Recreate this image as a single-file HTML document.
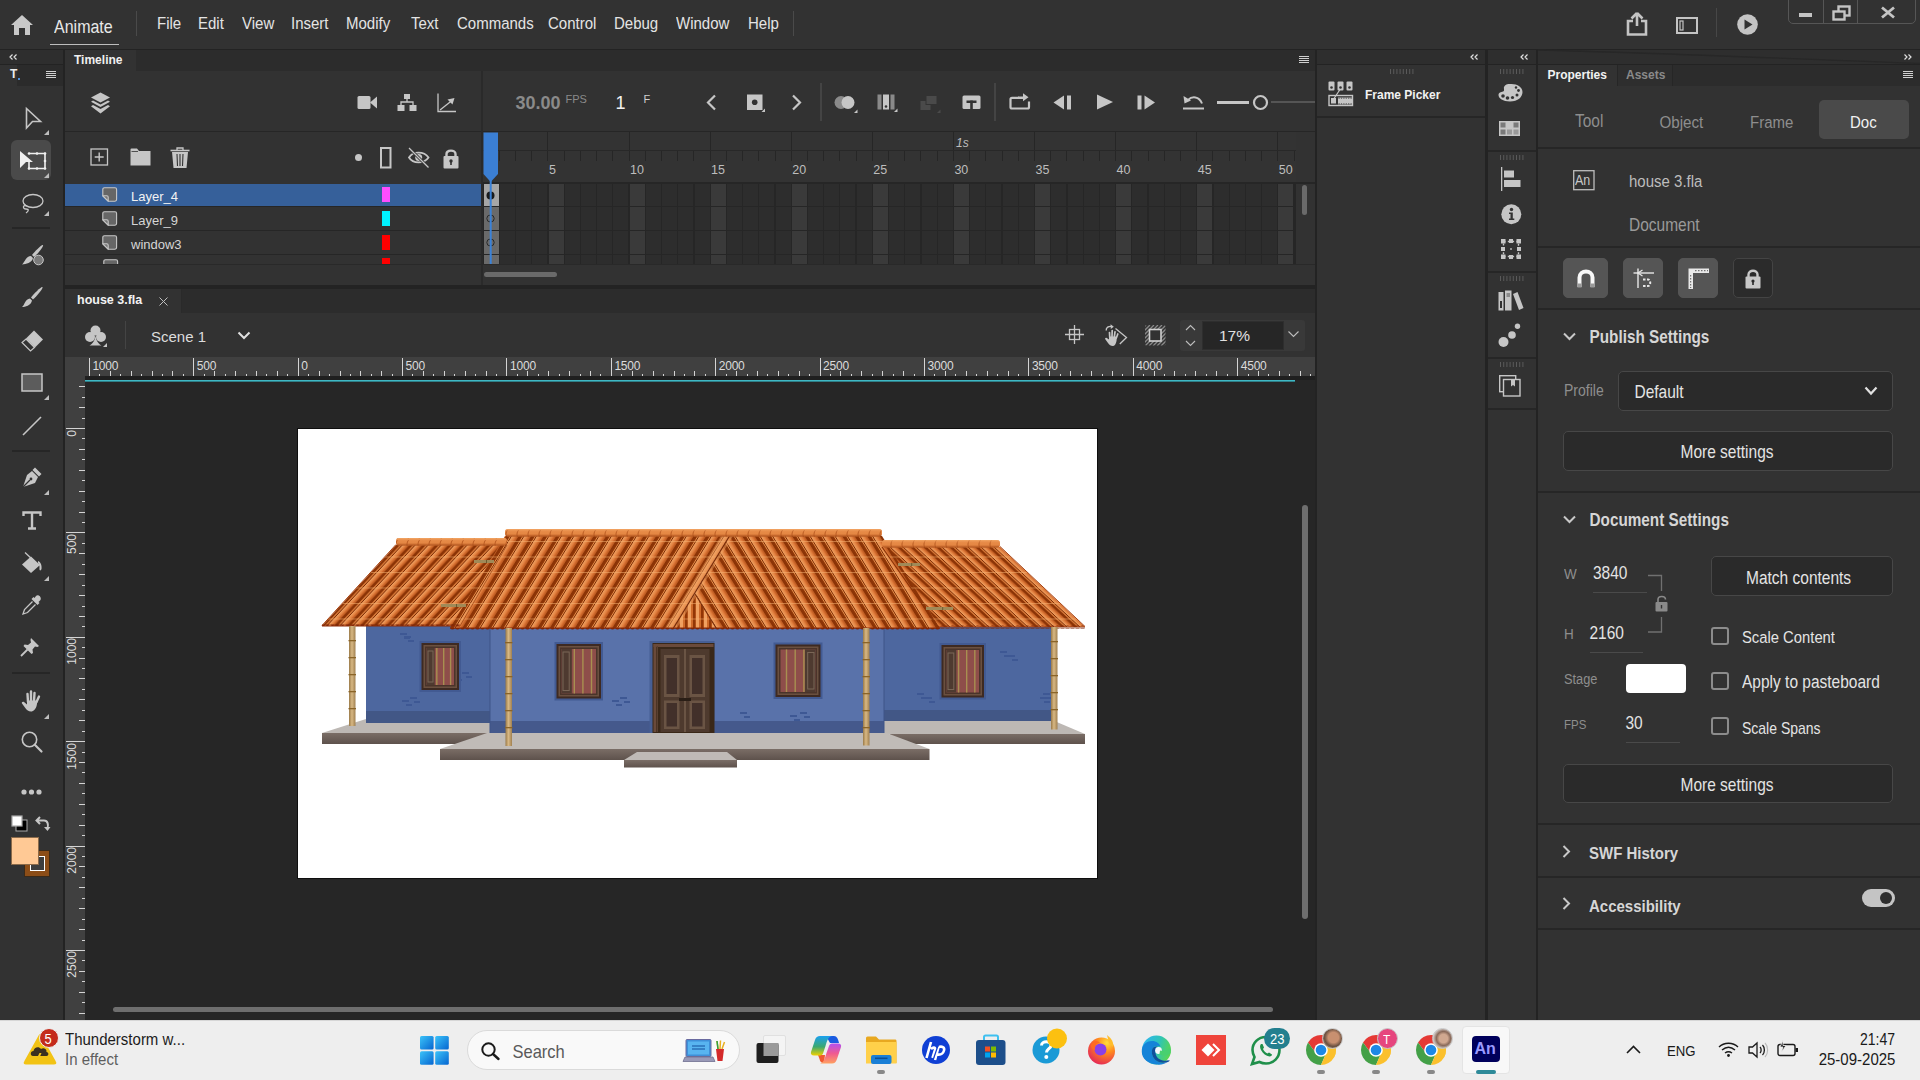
<!DOCTYPE html>
<html><head><meta charset="utf-8">
<style>
*{margin:0;padding:0;box-sizing:border-box}
html,body{width:1920px;height:1080px;overflow:hidden;background:#232323;font-family:"Liberation Sans",sans-serif;color:#e6e6e6}
.a{position:absolute}
.t{position:absolute;white-space:nowrap;line-height:1;transform-origin:0 0.845em}
.ty{transform:scaleY(1.14)}
svg{position:absolute;overflow:visible}
</style></head><body>
<!-- MENU BAR -->
<div class="a" style="left:0;top:0;width:1920px;height:49px;background:#323232"></div>
<svg style="left:10px;top:14px" width="24" height="22" viewBox="0 0 24 22"><path d="M12 1 L23 11 L20 11 L20 21 L15 21 L15 14 L9 14 L9 21 L4 21 L4 11 L1 11 Z" fill="#c8c8c8"/></svg>
<div class="t ty" style="left:54px;top:20px;font-size:16px;color:#e8e8e8">Animate</div>
<div class="a" style="left:50px;top:44px;width:69px;height:1px;background:#bdbdbd"></div>
<div class="a" style="left:136px;top:11px;width:1px;height:25px;background:#4a4a4a"></div>
<div class="t ty" style="left:157px;top:16.3px;font-size:15px;color:#e4e4e4">File</div><div class="t ty" style="left:198px;top:16.3px;font-size:15px;color:#e4e4e4">Edit</div><div class="t ty" style="left:242px;top:16.3px;font-size:15px;color:#e4e4e4">View</div><div class="t ty" style="left:291px;top:16.3px;font-size:15px;color:#e4e4e4">Insert</div><div class="t ty" style="left:346px;top:16.3px;font-size:15px;color:#e4e4e4">Modify</div><div class="t ty" style="left:411px;top:16.3px;font-size:15px;color:#e4e4e4">Text</div><div class="t ty" style="left:457px;top:16.3px;font-size:15px;color:#e4e4e4">Commands</div><div class="t ty" style="left:548px;top:16.3px;font-size:15px;color:#e4e4e4">Control</div><div class="t ty" style="left:614px;top:16.3px;font-size:15px;color:#e4e4e4">Debug</div><div class="t ty" style="left:676px;top:16.3px;font-size:15px;color:#e4e4e4">Window</div><div class="t ty" style="left:748px;top:16.3px;font-size:15px;color:#e4e4e4">Help</div>
<div class="a" style="left:793px;top:11px;width:1px;height:25px;background:#4a4a4a"></div>


<!-- top right icons -->
<svg style="left:1626px;top:12px" width="22" height="24" viewBox="0 0 22 24"><path d="M11 1 L5.5 6.5 M11 1 L16.5 6.5 M11 1.5 V14 M7 9 H2 V22.5 H20 V9 H15" stroke="#c4c4c4" stroke-width="2.6" fill="none"/></svg>
<svg style="left:1676px;top:17px" width="22" height="17" viewBox="0 0 22 17"><rect x="1" y="1" width="20" height="15" stroke="#c4c4c4" stroke-width="2" fill="none"/><rect x="4" y="4" width="3" height="9" stroke="#c4c4c4" stroke-width="1.2" fill="none"/></svg>
<div class="a" style="left:1716px;top:8px;width:1px;height:29px;background:#474747"></div>
<svg style="left:1737px;top:14px" width="21" height="21" viewBox="0 0 21 21"><circle cx="10.5" cy="10.5" r="10.3" fill="#c4c4c4"/><path d="M7.5 5.5 L15.5 10.5 L7.5 15.5 Z" fill="#323232"/></svg>
<div class="a" style="left:1788px;top:-2px;width:128px;height:26px;border:1px solid #565656;border-radius:0 0 5px 5px"></div>
<div class="a" style="left:1823px;top:0;width:1px;height:23px;background:#565656"></div>
<div class="a" style="left:1857px;top:0;width:1px;height:23px;background:#565656"></div>
<div class="a" style="left:1799px;top:13px;width:13px;height:4px;background:#c4c4c4"></div>
<svg style="left:1832px;top:5px" width="19" height="16" viewBox="0 0 19 16"><rect x="6.5" y="1.5" width="11" height="9" stroke="#c4c4c4" stroke-width="2.4" fill="none"/><rect x="1.5" y="6.5" width="11" height="8" stroke="#c4c4c4" stroke-width="2.4" fill="#323232"/></svg>
<svg style="left:1881px;top:7px" width="14" height="11" viewBox="0 0 14 11"><path d="M1 0.5 L13 10.5 M13 0.5 L1 10.5" stroke="#c4c4c4" stroke-width="2.8"/></svg>

<!-- LEFT TOOLBAR -->
<div class="a" style="left:0;top:50px;width:63px;height:14px;background:#2e2e2e"></div>
<div class="a" style="left:0;top:65px;width:63px;height:955px;background:#323232"></div>


<!-- LEFT TOOLBAR CONTENT -->
<svg style="left:9px;top:54px" width="8" height="6" viewBox="0 0 8 6"><path d="M3.5 0.5 L1 3 L3.5 5.5 M7.5 0.5 L5 3 L7.5 5.5" stroke="#e0e0e0" stroke-width="1.2" fill="none"/></svg>
<div class="a" style="left:17px;top:65px;width:46px;height:21px;background:#2b2b2b"></div>
<div class="t" style="left:10px;top:68px;font-size:12px;font-weight:700;color:#ececec">T</div>
<div class="a" style="left:18px;top:78px;width:2px;height:2px;background:#4b8fdc"></div>
<svg style="left:46px;top:71px" width="10" height="8" viewBox="0 0 10 8"><rect x="0" y="0" width="10" height="1" fill="#d0d0d0"/><rect x="0" y="2" width="10" height="1" fill="#d0d0d0"/><rect x="0" y="4" width="10" height="1" fill="#d0d0d0"/><rect x="0" y="6" width="10" height="1" fill="#d0d0d0"/></svg>
<svg style="left:25px;top:107px" width="17" height="23" viewBox="0 0 17 23"><path d="M1.5 1.5 L15.5 14.5 L7.5 14.5 L1.5 21 Z" stroke="#c6c6c6" stroke-width="1.6" fill="none" stroke-linejoin="miter"/></svg>
<svg style="left:44px;top:130px" width="5" height="5" viewBox="0 0 5 5"><path d="M5 0 L5 5 L0 5 Z" fill="#bdbdbd"/></svg>
<div class="a" style="left:11px;top:140px;width:40px;height:40px;background:#4a4a4a;border-radius:6px"></div>
<svg style="left:19px;top:149px" width="28" height="22" viewBox="0 0 28 22"><path d="M1 2 L14 13 L7 13 L1 19 Z" fill="#f0f0f0"/><path d="M10 4.5 H26 V19.5 H10 V13" stroke="#f0f0f0" stroke-width="1.6" fill="none"/><circle cx="10" cy="4.5" r="1.3" fill="#f0f0f0"/><circle cx="18" cy="4.5" r="1.3" fill="#f0f0f0"/><circle cx="26" cy="4.5" r="1.3" fill="#f0f0f0"/><circle cx="26" cy="12" r="1.3" fill="#f0f0f0"/><circle cx="26" cy="19.5" r="1.3" fill="#f0f0f0"/><circle cx="18" cy="19.5" r="1.3" fill="#f0f0f0"/><circle cx="10" cy="19.5" r="1.3" fill="#f0f0f0"/></svg>
<svg style="left:44px;top:173px" width="5" height="5" viewBox="0 0 5 5"><path d="M5 0 L5 5 L0 5 Z" fill="#bdbdbd"/></svg>
<svg style="left:21px;top:192px" width="23" height="23" viewBox="0 0 23 23"><ellipse cx="12" cy="9" rx="10" ry="6.5" stroke="#c6c6c6" stroke-width="1.3" fill="none"/><path d="M6 14 C2 12, 1 17, 5 17 C8 17, 8 19, 5 21" stroke="#c6c6c6" stroke-width="1.3" fill="none"/></svg>
<svg style="left:44px;top:211px" width="5" height="5" viewBox="0 0 5 5"><path d="M5 0 L5 5 L0 5 Z" fill="#bdbdbd"/></svg>
<div class="a" style="left:12px;top:227px;width:38px;height:2px;background:#262626"></div>
<svg style="left:21px;top:244px" width="24" height="23" viewBox="0 0 24 23"><path d="M22 1 C23 2, 17 10, 13 13 L11 11 C14 7, 21 0, 22 1Z" fill="#c6c6c6"/><path d="M10 12 L12 14 C11 19, 5 20, 1 20.5 C4 18, 5 12, 10 12Z" fill="#c6c6c6"/><circle cx="17.5" cy="16" r="4.8" fill="#7a7a7a" stroke="#c6c6c6" stroke-width="1"/></svg>
<svg style="left:21px;top:286px" width="23" height="23" viewBox="0 0 23 23"><path d="M21.5 1 C22.5 2, 16 10, 12 13.5 L10 11.5 C13 7.5, 20.5 0, 21.5 1Z" fill="#c6c6c6"/><path d="M9 12.5 L11 14.5 C10 19.5, 4 21, 1 21 C4 18.5, 4 13, 9 12.5Z" fill="#c6c6c6"/></svg>
<svg style="left:21px;top:329px" width="24" height="23" viewBox="0 0 24 23"><path d="M13 1.5 L22 10.5 L14 18.5 L5 9.5 Z" fill="#c6c6c6"/><path d="M5 10 L13.5 18.5 L9.5 22 L1 13.5 Z" fill="none" stroke="#c6c6c6" stroke-width="1.2"/></svg>
<svg style="left:21px;top:373px" width="22" height="19" viewBox="0 0 22 19"><rect x="1" y="1" width="20" height="17" fill="#5c5c5c" stroke="#c6c6c6" stroke-width="1.5"/></svg>
<svg style="left:44px;top:395px" width="5" height="5" viewBox="0 0 5 5"><path d="M5 0 L5 5 L0 5 Z" fill="#bdbdbd"/></svg>
<svg style="left:22px;top:416px" width="20" height="20" viewBox="0 0 20 20"><path d="M1 19 L19 1" stroke="#c6c6c6" stroke-width="1.6"/></svg>
<div class="a" style="left:12px;top:450px;width:38px;height:2px;background:#262626"></div>
<svg style="left:21px;top:466px" width="22" height="22" viewBox="0 0 22 22"><path d="M14 1.5 L20.5 8 L18 10.5 L11.5 4 Z" fill="#c6c6c6"/><path d="M11 5 L17 11 L14 17 L2 21 L6 9 Z" fill="#c6c6c6"/><path d="M2 21 L9 14" stroke="#323232" stroke-width="1.3"/><circle cx="10" cy="13" r="1.4" fill="#323232"/></svg>
<svg style="left:44px;top:490px" width="5" height="5" viewBox="0 0 5 5"><path d="M5 0 L5 5 L0 5 Z" fill="#bdbdbd"/></svg>
<svg style="left:22px;top:511px" width="20" height="19" viewBox="0 0 20 19"><path d="M1.5 5 V1.5 H18.5 V5 M10 1.5 V17.5 M6 17.5 H14" stroke="#c6c6c6" stroke-width="2.4" fill="none"/></svg>
<svg style="left:21px;top:552px" width="22" height="22" viewBox="0 0 22 22"><path d="M10 4.5 L19 13 L10 21 L1 12.5 Z" fill="#c6c6c6"/><path d="M4 0.5 L12 8" stroke="#c6c6c6" stroke-width="1.3"/><path d="M17 9 C20 10, 21 14, 20.5 17 C20 19, 18 19, 18.5 16 C18.7 14, 18 12, 17 11Z" fill="#c6c6c6"/></svg>
<svg style="left:44px;top:576px" width="5" height="5" viewBox="0 0 5 5"><path d="M5 0 L5 5 L0 5 Z" fill="#bdbdbd"/></svg>
<svg style="left:21px;top:594px" width="22" height="22" viewBox="0 0 22 22"><path d="M15 2 C17 0, 21 3, 19.5 6 L17.5 8 L18.5 9 L16.5 11 L10.5 5 L12.5 3 L13.5 4 Z" fill="#c6c6c6"/><path d="M11.5 7.5 L3.5 15.5 L2 20 L6.5 18.5 L14.5 10.5" stroke="#c6c6c6" stroke-width="1.3" fill="none"/></svg>
<svg style="left:20px;top:637px" width="20" height="20" viewBox="0 0 20 20"><path d="M11 1 L19 9 L17.5 10 L15 9.5 L12.5 12.5 L13 16 L11.5 17 L3.5 9 L4.5 7.5 L8 8 L11 5.5 L10.5 3 Z" fill="#c6c6c6"/><path d="M7.5 12.5 L1 19" stroke="#c6c6c6" stroke-width="1.8"/></svg>
<div class="a" style="left:12px;top:672px;width:38px;height:2px;background:#262626"></div>
<svg style="left:21px;top:689px" width="22" height="23" viewBox="0 0 22 23"><path d="M7 13 L6.5 5 M10 12 L10 2.5 M13 12 L13.5 4 M15.5 13 L18 7.5" stroke="#c6c6c6" stroke-width="2.4" stroke-linecap="round"/><path d="M6 11.5 H16.5 L15.8 16 C15 20, 12.5 22.5, 10 22.5 C7.5 22.5, 5.8 21, 4.3 19 L1 14.5 C0.2 13.2, 1.8 12, 3 13 L6 15.5 Z" fill="#c6c6c6"/></svg>
<svg style="left:44px;top:714px" width="5" height="5" viewBox="0 0 5 5"><path d="M5 0 L5 5 L0 5 Z" fill="#bdbdbd"/></svg>
<svg style="left:21px;top:731px" width="22" height="23" viewBox="0 0 22 23"><circle cx="8.5" cy="8.5" r="7.2" stroke="#c6c6c6" stroke-width="1.6" fill="none"/><path d="M13.8 13.8 L20.5 20.5" stroke="#c6c6c6" stroke-width="2.2" stroke-linecap="round"/></svg>
<svg style="left:20px;top:789px" width="23" height="6" viewBox="0 0 23 6"><circle cx="4" cy="3" r="2.6" fill="#c6c6c6"/><circle cx="11.5" cy="3" r="2.6" fill="#c6c6c6"/><circle cx="19" cy="3" r="2.6" fill="#c6c6c6"/></svg>
<svg style="left:11px;top:815px" width="17" height="17" viewBox="0 0 17 17"><rect x="5" y="5" width="11" height="11" fill="#000" stroke="#aaa" stroke-width="1"/><rect x="1" y="1" width="10" height="10" fill="#fff" stroke="#aaa" stroke-width="1.2"/></svg>
<svg style="left:36px;top:816px" width="15" height="16" viewBox="0 0 15 16"><path d="M4 1 L0.5 4.5 L4 8 M1 4.5 H8 C12 4.5, 12.5 9, 11.5 12" stroke="#c6c6c6" stroke-width="2" fill="none"/><path d="M8 11 L11.5 15 L14.5 11 Z" fill="#c6c6c6"/></svg>
<div class="a" style="left:24px;top:850px;width:26px;height:27px;background:#8c4d17;border:1px solid #3a2a1a"></div>
<div class="a" style="left:30px;top:856px;width:15px;height:15px;background:#3e3e3e;border:1.5px solid #ffffff"></div>
<div class="a" style="left:11px;top:837px;width:28px;height:28px;background:#ffc995;border:1px solid #8a6a4a"></div>

<!-- TIMELINE PANEL -->
<div class="a" style="left:65px;top:50px;width:1250px;height:235px;background:#323232"></div>

<div class="a" style="left:136px;top:50px;width:1179px;height:21px;background:#2c2c2c"></div>
<div class="t" style="left:74px;top:54px;font-size:12px;font-weight:700;color:#f0f0f0">Timeline</div>
<svg style="left:1299px;top:56px" width="10" height="8" viewBox="0 0 10 8"><rect x="0" y="0" width="10" height="1" fill="#d0d0d0"/><rect x="0" y="2" width="10" height="1" fill="#d0d0d0"/><rect x="0" y="4" width="10" height="1" fill="#d0d0d0"/><rect x="0" y="6" width="10" height="1" fill="#d0d0d0"/></svg>
<svg style="left:90px;top:92px" width="21" height="22" viewBox="0 0 21 22"><path d="M10.5 0.5 L20 5.5 L10.5 10.5 L1 5.5 Z" fill="#c6c6c6"/><path d="M3 8.5 L10.5 12.5 L18 8.5 L20 9.8 L10.5 15 L1 9.8 Z" fill="#c6c6c6"/><path d="M3 13 L10.5 17 L18 13 L20 14.3 L10.5 21.5 L1 14.3 Z" fill="#c6c6c6"/></svg>
<svg style="left:357px;top:95px" width="21" height="15" viewBox="0 0 21 15"><rect x="0.5" y="1" width="13" height="13" rx="1.5" fill="#c6c6c6"/><path d="M13 7.5 L20 1.5 V13.5 Z" fill="#c6c6c6"/></svg>
<svg style="left:397px;top:94px" width="20" height="17" viewBox="0 0 20 17"><rect x="7" y="0" width="6" height="5" fill="#c6c6c6"/><rect x="0.5" y="11" width="7" height="6" fill="#c6c6c6"/><rect x="12.5" y="11" width="7" height="6" fill="#c6c6c6"/><path d="M10 5 V8 M4 11 V8 H16 V11" stroke="#c6c6c6" stroke-width="1.3" fill="none"/></svg>
<svg style="left:437px;top:93px" width="20" height="20" viewBox="0 0 20 20"><path d="M1 0.5 V18.5 H19" stroke="#c6c6c6" stroke-width="1.3" fill="none"/><path d="M3 17 L15 7.5" stroke="#c6c6c6" stroke-width="1.3"/><path d="M17.5 5 L10.5 6.5 L15.5 11.5 Z" fill="#c6c6c6"/></svg>
<div class="t" style="left:515.5px;top:94px;font-size:18px;font-weight:700;color:#8a8a8a">30.00</div>
<div class="t" style="left:565.5px;top:93.6px;font-size:11px;color:#8a8a8a">FPS</div>
<div class="t" style="left:615.5px;top:94px;font-size:18px;color:#f2f2f2">1</div>
<div class="t" style="left:643.5px;top:93.6px;font-size:11px;color:#cfcfcf">F</div>
<svg style="left:705px;top:94px" width="12" height="17" viewBox="0 0 12 17"><path d="M10 1.5 L3 8.5 L10 15.5" stroke="#c6c6c6" stroke-width="2.2" fill="none"/></svg>
<svg style="left:747px;top:94px" width="19" height="20" viewBox="0 0 19 20"><rect x="0" y="0.5" width="15.5" height="15.5" fill="#c6c6c6"/><circle cx="7.7" cy="8.2" r="2.8" fill="#323232"/><path d="M18 14.5 V18 H14.5 Z" fill="#c6c6c6"/></svg>
<svg style="left:791px;top:94px" width="12" height="17" viewBox="0 0 12 17"><path d="M2 1.5 L9 8.5 L2 15.5" stroke="#c6c6c6" stroke-width="2.2" fill="none"/></svg>
<div class="a" style="left:820px;top:83px;width:2px;height:38px;background:#444"></div>
<svg style="left:834px;top:95px" width="25" height="19" viewBox="0 0 25 19"><circle cx="7" cy="7.5" r="6.5" fill="#8a8a8a"/><circle cx="14" cy="7.5" r="6.5" fill="#c6c6c6"/><path d="M23.5 14.5 V18 H20 Z" fill="#c6c6c6"/></svg>
<svg style="left:877px;top:94px" width="22" height="20" viewBox="0 0 22 20"><rect x="0.5" y="0.5" width="4" height="15" fill="#8a8a8a"/><rect x="6" y="0.5" width="6" height="15" fill="#c6c6c6"/><rect x="13.5" y="0.5" width="4" height="15" fill="#8a8a8a"/><circle cx="9" cy="12.5" r="1.3" fill="#323232"/><path d="M20.5 14.5 V18 H17 Z" fill="#c6c6c6"/></svg>
<svg style="left:920px;top:95px" width="22" height="19" viewBox="0 0 22 19"><rect x="0.5" y="6" width="10" height="9" fill="#4a4a4a"/><rect x="6" y="0.5" width="11" height="9" fill="#4a4a4a" stroke="#323232" stroke-width="1"/><path d="M20.5 14.5 V18 H17 Z" fill="#4a4a4a"/></svg>
<svg style="left:962px;top:95px" width="20" height="15" viewBox="0 0 20 15"><rect x="0.5" y="0.5" width="18" height="13.5" rx="1.5" fill="#c6c6c6"/><rect x="4.5" y="5.5" width="10" height="2.5" fill="#323232"/><rect x="8.2" y="5.5" width="2.6" height="9" fill="#323232"/></svg>
<div class="a" style="left:994px;top:83px;width:2px;height:38px;background:#444"></div>
<svg style="left:1009px;top:93px" width="22" height="17" viewBox="0 0 22 17"><path d="M10 4.8 H3 Q1.5 4.8 1.5 6.3 V14.3 Q1.5 15.5 3 15.5 H18.5 Q20 15.5 20 14 V8.5" stroke="#c6c6c6" stroke-width="2.2" fill="none"/><path d="M9 3.5 H14 V0.3 L19.5 4.3 L14 8.3 V6 H9 Z" fill="#c6c6c6"/></svg>
<svg style="left:1053px;top:95px" width="19" height="15" viewBox="0 0 19 15"><path d="M11 0.5 V14.5 L0.5 7.5 Z" fill="#c6c6c6"/><rect x="14" y="0.5" width="4" height="14" fill="#c6c6c6"/></svg>
<svg style="left:1096px;top:94px" width="18" height="16" viewBox="0 0 18 16"><path d="M1 0.5 V15.5 L17 8 Z" fill="#c6c6c6"/></svg>
<svg style="left:1137px;top:95px" width="19" height="15" viewBox="0 0 19 15"><rect x="0.5" y="0.5" width="4" height="14" fill="#c6c6c6"/><path d="M7.5 0.5 V14.5 L18 7.5 Z" fill="#c6c6c6"/></svg>
<svg style="left:1182px;top:94px" width="23" height="17" viewBox="0 0 23 17"><path d="M1 14.5 H22" stroke="#c6c6c6" stroke-width="2"/><path d="M6 6 C10 2, 17 2, 20 9.5" stroke="#c6c6c6" stroke-width="2" fill="none"/><path d="M1.5 2 L2.5 9.5 L9 6.5 Z" fill="#c6c6c6"/></svg>
<div class="a" style="left:1217px;top:101px;width:32px;height:2.5px;background:#c6c6c6"></div>
<svg style="left:1252px;top:94px" width="17" height="17" viewBox="0 0 17 17"><circle cx="8.5" cy="8.5" r="6.5" stroke="#c6c6c6" stroke-width="2.2" fill="none"/></svg>
<div class="a" style="left:1271px;top:101px;width:44px;height:1.5px;background:#555"></div>
<div class="a" style="left:65px;top:131px;width:1250px;height:1px;background:#262626"></div>
<svg style="left:90px;top:148px" width="19" height="18" viewBox="0 0 19 18"><rect x="1" y="1" width="16.5" height="16" stroke="#c6c6c6" stroke-width="1.3" fill="none"/><path d="M9.2 4.5 V13.5 M4.7 9 H13.7" stroke="#c6c6c6" stroke-width="1.4"/></svg>
<svg style="left:130px;top:148px" width="22" height="18" viewBox="0 0 22 18"><path d="M0.5 1.5 Q0.5 0.5 1.5 0.5 H7 L9 3 H20.5 V17.5 H0.5 Z" fill="#c6c6c6"/><path d="M1.5 3.5 H8" stroke="#323232" stroke-width="0.8"/></svg>
<svg style="left:170px;top:147px" width="20" height="22" viewBox="0 0 20 22"><path d="M0.5 3.5 H19.5" stroke="#c6c6c6" stroke-width="1.6"/><path d="M7 3 V1 H13 V3" stroke="#c6c6c6" stroke-width="1.3" fill="none"/><path d="M2 5 L3.5 21 H16.5 L18 5 Z" fill="#c6c6c6"/><path d="M7 7 L7.5 19 M10 7 V19 M13 7 L12.5 19" stroke="#323232" stroke-width="1.1"/></svg>
<svg style="left:355px;top:154px" width="8" height="8" viewBox="0 0 8 8"><circle cx="3.5" cy="3.5" r="3.5" fill="#c6c6c6"/></svg>
<svg style="left:380px;top:147px" width="12" height="22" viewBox="0 0 12 22"><rect x="1" y="1" width="9.5" height="19.5" stroke="#c6c6c6" stroke-width="2" fill="none"/></svg>
<svg style="left:408px;top:147px" width="22" height="22" viewBox="0 0 22 22"><path d="M1 10.5 C5 4, 16 4, 20.5 10.5 C16 17, 5 17, 1 10.5 Z" stroke="#c6c6c6" stroke-width="1.8" fill="none"/><circle cx="10.7" cy="10.5" r="3.5" fill="#c6c6c6"/><path d="M1 1 L20.5 20.5" stroke="#323232" stroke-width="3"/><path d="M1 1 L20.5 20.5" stroke="#c6c6c6" stroke-width="1.3"/></svg>
<svg style="left:443px;top:148px" width="16" height="21" viewBox="0 0 16 21"><path d="M3.5 8.5 V6 C3.5 1.5, 12.5 1.5, 12.5 6 V8.5" stroke="#c6c6c6" stroke-width="2.4" fill="none"/><rect x="0.5" y="8" width="15" height="12.5" rx="1" fill="#c6c6c6"/><circle cx="8" cy="13" r="1.7" fill="#323232"/><rect x="7.2" y="13" width="1.6" height="4" fill="#323232"/></svg>
<div class="a" style="left:483px;top:132px;width:813px;height:52px;background:#333333"></div>
<div class="a" style="left:483px;top:150px;width:813px;height:1px;background:#282828"></div>
<div class="a" style="left:483px;top:182px;width:832px;height:2px;background:#262626"></div>
<div class="a" style="left:481px;top:71px;width:2px;height:214px;background:#2a2a2a"></div>
<div class="a" style="left:547.4px;top:132px;width:1px;height:18px;background:#262626"></div>
<div class="a" style="left:628.5px;top:132px;width:1px;height:18px;background:#262626"></div>
<div class="a" style="left:709.6px;top:132px;width:1px;height:18px;background:#262626"></div>
<div class="a" style="left:790.7px;top:132px;width:1px;height:18px;background:#262626"></div>
<div class="a" style="left:871.8px;top:132px;width:1px;height:18px;background:#262626"></div>
<div class="a" style="left:952.9px;top:132px;width:1px;height:18px;background:#262626"></div>
<div class="a" style="left:1034.0px;top:132px;width:1px;height:18px;background:#262626"></div>
<div class="a" style="left:1115.1px;top:132px;width:1px;height:18px;background:#262626"></div>
<div class="a" style="left:1196.2px;top:132px;width:1px;height:18px;background:#262626"></div>
<div class="a" style="left:1277.3px;top:132px;width:1px;height:18px;background:#262626"></div>
<div class="a" style="left:498.7px;top:151px;width:1px;height:10px;background:#262626"></div>
<div class="a" style="left:514.9px;top:151px;width:1px;height:10px;background:#262626"></div>
<div class="a" style="left:531.2px;top:151px;width:1px;height:10px;background:#262626"></div>
<div class="a" style="left:547.4px;top:151px;width:1px;height:10px;background:#262626"></div>
<div class="a" style="left:563.6px;top:151px;width:1px;height:10px;background:#262626"></div>
<div class="a" style="left:579.8px;top:151px;width:1px;height:10px;background:#262626"></div>
<div class="a" style="left:596.0px;top:151px;width:1px;height:10px;background:#262626"></div>
<div class="a" style="left:612.3px;top:151px;width:1px;height:10px;background:#262626"></div>
<div class="a" style="left:628.5px;top:151px;width:1px;height:10px;background:#262626"></div>
<div class="a" style="left:644.7px;top:151px;width:1px;height:10px;background:#262626"></div>
<div class="a" style="left:660.9px;top:151px;width:1px;height:10px;background:#262626"></div>
<div class="a" style="left:677.1px;top:151px;width:1px;height:10px;background:#262626"></div>
<div class="a" style="left:693.4px;top:151px;width:1px;height:10px;background:#262626"></div>
<div class="a" style="left:709.6px;top:151px;width:1px;height:10px;background:#262626"></div>
<div class="a" style="left:725.8px;top:151px;width:1px;height:10px;background:#262626"></div>
<div class="a" style="left:742.0px;top:151px;width:1px;height:10px;background:#262626"></div>
<div class="a" style="left:758.2px;top:151px;width:1px;height:10px;background:#262626"></div>
<div class="a" style="left:774.5px;top:151px;width:1px;height:10px;background:#262626"></div>
<div class="a" style="left:790.7px;top:151px;width:1px;height:10px;background:#262626"></div>
<div class="a" style="left:806.9px;top:151px;width:1px;height:10px;background:#262626"></div>
<div class="a" style="left:823.1px;top:151px;width:1px;height:10px;background:#262626"></div>
<div class="a" style="left:839.3px;top:151px;width:1px;height:10px;background:#262626"></div>
<div class="a" style="left:855.6px;top:151px;width:1px;height:10px;background:#262626"></div>
<div class="a" style="left:871.8px;top:151px;width:1px;height:10px;background:#262626"></div>
<div class="a" style="left:888.0px;top:151px;width:1px;height:10px;background:#262626"></div>
<div class="a" style="left:904.2px;top:151px;width:1px;height:10px;background:#262626"></div>
<div class="a" style="left:920.4px;top:151px;width:1px;height:10px;background:#262626"></div>
<div class="a" style="left:936.7px;top:151px;width:1px;height:10px;background:#262626"></div>
<div class="a" style="left:952.9px;top:151px;width:1px;height:10px;background:#262626"></div>
<div class="a" style="left:969.1px;top:151px;width:1px;height:10px;background:#262626"></div>
<div class="a" style="left:985.3px;top:151px;width:1px;height:10px;background:#262626"></div>
<div class="a" style="left:1001.5px;top:151px;width:1px;height:10px;background:#262626"></div>
<div class="a" style="left:1017.8px;top:151px;width:1px;height:10px;background:#262626"></div>
<div class="a" style="left:1034.0px;top:151px;width:1px;height:10px;background:#262626"></div>
<div class="a" style="left:1050.2px;top:151px;width:1px;height:10px;background:#262626"></div>
<div class="a" style="left:1066.4px;top:151px;width:1px;height:10px;background:#262626"></div>
<div class="a" style="left:1082.6px;top:151px;width:1px;height:10px;background:#262626"></div>
<div class="a" style="left:1098.9px;top:151px;width:1px;height:10px;background:#262626"></div>
<div class="a" style="left:1115.1px;top:151px;width:1px;height:10px;background:#262626"></div>
<div class="a" style="left:1131.3px;top:151px;width:1px;height:10px;background:#262626"></div>
<div class="a" style="left:1147.5px;top:151px;width:1px;height:10px;background:#262626"></div>
<div class="a" style="left:1163.7px;top:151px;width:1px;height:10px;background:#262626"></div>
<div class="a" style="left:1180.0px;top:151px;width:1px;height:10px;background:#262626"></div>
<div class="a" style="left:1196.2px;top:151px;width:1px;height:10px;background:#262626"></div>
<div class="a" style="left:1212.4px;top:151px;width:1px;height:10px;background:#262626"></div>
<div class="a" style="left:1228.6px;top:151px;width:1px;height:10px;background:#262626"></div>
<div class="a" style="left:1244.8px;top:151px;width:1px;height:10px;background:#262626"></div>
<div class="a" style="left:1261.1px;top:151px;width:1px;height:10px;background:#262626"></div>
<div class="a" style="left:1277.3px;top:151px;width:1px;height:10px;background:#262626"></div>
<div class="a" style="left:1293.5px;top:151px;width:1px;height:10px;background:#262626"></div>
<div class="t" style="left:548.9px;top:164px;font-size:12.5px;color:#bdbdbd">5</div>
<div class="t" style="left:630.0px;top:164px;font-size:12.5px;color:#bdbdbd">10</div>
<div class="t" style="left:711.1px;top:164px;font-size:12.5px;color:#bdbdbd">15</div>
<div class="t" style="left:792.2px;top:164px;font-size:12.5px;color:#bdbdbd">20</div>
<div class="t" style="left:873.3px;top:164px;font-size:12.5px;color:#bdbdbd">25</div>
<div class="t" style="left:954.4px;top:164px;font-size:12.5px;color:#bdbdbd">30</div>
<div class="t" style="left:1035.5px;top:164px;font-size:12.5px;color:#bdbdbd">35</div>
<div class="t" style="left:1116.6px;top:164px;font-size:12.5px;color:#bdbdbd">40</div>
<div class="t" style="left:1197.7px;top:164px;font-size:12.5px;color:#bdbdbd">45</div>
<div class="t" style="left:1278.8px;top:164px;font-size:12.5px;color:#bdbdbd">50</div>
<div class="t" style="left:956px;top:137px;font-size:12px;font-style:italic;color:#bdbdbd">1s</div>
<div class="a" style="left:483px;top:184px;width:813px;height:80px;background:#262626"></div>
<div class="a" style="left:483.6px;top:184px;width:15.0px;height:22px;background:#a6a6a6"></div>
<div class="a" style="left:499.8px;top:184px;width:15.0px;height:22px;background:#2d2d2d"></div>
<div class="a" style="left:516.0px;top:184px;width:15.0px;height:22px;background:#2d2d2d"></div>
<div class="a" style="left:532.3px;top:184px;width:15.0px;height:22px;background:#2d2d2d"></div>
<div class="a" style="left:548.5px;top:184px;width:15.0px;height:22px;background:#3a3a3a"></div>
<div class="a" style="left:564.7px;top:184px;width:15.0px;height:22px;background:#2d2d2d"></div>
<div class="a" style="left:580.9px;top:184px;width:15.0px;height:22px;background:#2d2d2d"></div>
<div class="a" style="left:597.1px;top:184px;width:15.0px;height:22px;background:#2d2d2d"></div>
<div class="a" style="left:613.4px;top:184px;width:15.0px;height:22px;background:#2d2d2d"></div>
<div class="a" style="left:629.6px;top:184px;width:15.0px;height:22px;background:#3a3a3a"></div>
<div class="a" style="left:645.8px;top:184px;width:15.0px;height:22px;background:#2d2d2d"></div>
<div class="a" style="left:662.0px;top:184px;width:15.0px;height:22px;background:#2d2d2d"></div>
<div class="a" style="left:678.2px;top:184px;width:15.0px;height:22px;background:#2d2d2d"></div>
<div class="a" style="left:694.5px;top:184px;width:15.0px;height:22px;background:#2d2d2d"></div>
<div class="a" style="left:710.7px;top:184px;width:15.0px;height:22px;background:#3a3a3a"></div>
<div class="a" style="left:726.9px;top:184px;width:15.0px;height:22px;background:#2d2d2d"></div>
<div class="a" style="left:743.1px;top:184px;width:15.0px;height:22px;background:#2d2d2d"></div>
<div class="a" style="left:759.3px;top:184px;width:15.0px;height:22px;background:#2d2d2d"></div>
<div class="a" style="left:775.6px;top:184px;width:15.0px;height:22px;background:#2d2d2d"></div>
<div class="a" style="left:791.8px;top:184px;width:15.0px;height:22px;background:#3a3a3a"></div>
<div class="a" style="left:808.0px;top:184px;width:15.0px;height:22px;background:#2d2d2d"></div>
<div class="a" style="left:824.2px;top:184px;width:15.0px;height:22px;background:#2d2d2d"></div>
<div class="a" style="left:840.4px;top:184px;width:15.0px;height:22px;background:#2d2d2d"></div>
<div class="a" style="left:856.7px;top:184px;width:15.0px;height:22px;background:#2d2d2d"></div>
<div class="a" style="left:872.9px;top:184px;width:15.0px;height:22px;background:#3a3a3a"></div>
<div class="a" style="left:889.1px;top:184px;width:15.0px;height:22px;background:#2d2d2d"></div>
<div class="a" style="left:905.3px;top:184px;width:15.0px;height:22px;background:#2d2d2d"></div>
<div class="a" style="left:921.5px;top:184px;width:15.0px;height:22px;background:#2d2d2d"></div>
<div class="a" style="left:937.8px;top:184px;width:15.0px;height:22px;background:#2d2d2d"></div>
<div class="a" style="left:954.0px;top:184px;width:15.0px;height:22px;background:#3a3a3a"></div>
<div class="a" style="left:970.2px;top:184px;width:15.0px;height:22px;background:#2d2d2d"></div>
<div class="a" style="left:986.4px;top:184px;width:15.0px;height:22px;background:#2d2d2d"></div>
<div class="a" style="left:1002.6px;top:184px;width:15.0px;height:22px;background:#2d2d2d"></div>
<div class="a" style="left:1018.9px;top:184px;width:15.0px;height:22px;background:#2d2d2d"></div>
<div class="a" style="left:1035.1px;top:184px;width:15.0px;height:22px;background:#3a3a3a"></div>
<div class="a" style="left:1051.3px;top:184px;width:15.0px;height:22px;background:#2d2d2d"></div>
<div class="a" style="left:1067.5px;top:184px;width:15.0px;height:22px;background:#2d2d2d"></div>
<div class="a" style="left:1083.7px;top:184px;width:15.0px;height:22px;background:#2d2d2d"></div>
<div class="a" style="left:1100.0px;top:184px;width:15.0px;height:22px;background:#2d2d2d"></div>
<div class="a" style="left:1116.2px;top:184px;width:15.0px;height:22px;background:#3a3a3a"></div>
<div class="a" style="left:1132.4px;top:184px;width:15.0px;height:22px;background:#2d2d2d"></div>
<div class="a" style="left:1148.6px;top:184px;width:15.0px;height:22px;background:#2d2d2d"></div>
<div class="a" style="left:1164.8px;top:184px;width:15.0px;height:22px;background:#2d2d2d"></div>
<div class="a" style="left:1181.1px;top:184px;width:15.0px;height:22px;background:#2d2d2d"></div>
<div class="a" style="left:1197.3px;top:184px;width:15.0px;height:22px;background:#3a3a3a"></div>
<div class="a" style="left:1213.5px;top:184px;width:15.0px;height:22px;background:#2d2d2d"></div>
<div class="a" style="left:1229.7px;top:184px;width:15.0px;height:22px;background:#2d2d2d"></div>
<div class="a" style="left:1245.9px;top:184px;width:15.0px;height:22px;background:#2d2d2d"></div>
<div class="a" style="left:1262.2px;top:184px;width:15.0px;height:22px;background:#2d2d2d"></div>
<div class="a" style="left:1278.4px;top:184px;width:15.0px;height:22px;background:#3a3a3a"></div>
<div class="a" style="left:483.6px;top:207px;width:15.0px;height:23px;background:#6a6a6a"></div>
<div class="a" style="left:499.8px;top:207px;width:15.0px;height:23px;background:#2d2d2d"></div>
<div class="a" style="left:516.0px;top:207px;width:15.0px;height:23px;background:#2d2d2d"></div>
<div class="a" style="left:532.3px;top:207px;width:15.0px;height:23px;background:#2d2d2d"></div>
<div class="a" style="left:548.5px;top:207px;width:15.0px;height:23px;background:#3a3a3a"></div>
<div class="a" style="left:564.7px;top:207px;width:15.0px;height:23px;background:#2d2d2d"></div>
<div class="a" style="left:580.9px;top:207px;width:15.0px;height:23px;background:#2d2d2d"></div>
<div class="a" style="left:597.1px;top:207px;width:15.0px;height:23px;background:#2d2d2d"></div>
<div class="a" style="left:613.4px;top:207px;width:15.0px;height:23px;background:#2d2d2d"></div>
<div class="a" style="left:629.6px;top:207px;width:15.0px;height:23px;background:#3a3a3a"></div>
<div class="a" style="left:645.8px;top:207px;width:15.0px;height:23px;background:#2d2d2d"></div>
<div class="a" style="left:662.0px;top:207px;width:15.0px;height:23px;background:#2d2d2d"></div>
<div class="a" style="left:678.2px;top:207px;width:15.0px;height:23px;background:#2d2d2d"></div>
<div class="a" style="left:694.5px;top:207px;width:15.0px;height:23px;background:#2d2d2d"></div>
<div class="a" style="left:710.7px;top:207px;width:15.0px;height:23px;background:#3a3a3a"></div>
<div class="a" style="left:726.9px;top:207px;width:15.0px;height:23px;background:#2d2d2d"></div>
<div class="a" style="left:743.1px;top:207px;width:15.0px;height:23px;background:#2d2d2d"></div>
<div class="a" style="left:759.3px;top:207px;width:15.0px;height:23px;background:#2d2d2d"></div>
<div class="a" style="left:775.6px;top:207px;width:15.0px;height:23px;background:#2d2d2d"></div>
<div class="a" style="left:791.8px;top:207px;width:15.0px;height:23px;background:#3a3a3a"></div>
<div class="a" style="left:808.0px;top:207px;width:15.0px;height:23px;background:#2d2d2d"></div>
<div class="a" style="left:824.2px;top:207px;width:15.0px;height:23px;background:#2d2d2d"></div>
<div class="a" style="left:840.4px;top:207px;width:15.0px;height:23px;background:#2d2d2d"></div>
<div class="a" style="left:856.7px;top:207px;width:15.0px;height:23px;background:#2d2d2d"></div>
<div class="a" style="left:872.9px;top:207px;width:15.0px;height:23px;background:#3a3a3a"></div>
<div class="a" style="left:889.1px;top:207px;width:15.0px;height:23px;background:#2d2d2d"></div>
<div class="a" style="left:905.3px;top:207px;width:15.0px;height:23px;background:#2d2d2d"></div>
<div class="a" style="left:921.5px;top:207px;width:15.0px;height:23px;background:#2d2d2d"></div>
<div class="a" style="left:937.8px;top:207px;width:15.0px;height:23px;background:#2d2d2d"></div>
<div class="a" style="left:954.0px;top:207px;width:15.0px;height:23px;background:#3a3a3a"></div>
<div class="a" style="left:970.2px;top:207px;width:15.0px;height:23px;background:#2d2d2d"></div>
<div class="a" style="left:986.4px;top:207px;width:15.0px;height:23px;background:#2d2d2d"></div>
<div class="a" style="left:1002.6px;top:207px;width:15.0px;height:23px;background:#2d2d2d"></div>
<div class="a" style="left:1018.9px;top:207px;width:15.0px;height:23px;background:#2d2d2d"></div>
<div class="a" style="left:1035.1px;top:207px;width:15.0px;height:23px;background:#3a3a3a"></div>
<div class="a" style="left:1051.3px;top:207px;width:15.0px;height:23px;background:#2d2d2d"></div>
<div class="a" style="left:1067.5px;top:207px;width:15.0px;height:23px;background:#2d2d2d"></div>
<div class="a" style="left:1083.7px;top:207px;width:15.0px;height:23px;background:#2d2d2d"></div>
<div class="a" style="left:1100.0px;top:207px;width:15.0px;height:23px;background:#2d2d2d"></div>
<div class="a" style="left:1116.2px;top:207px;width:15.0px;height:23px;background:#3a3a3a"></div>
<div class="a" style="left:1132.4px;top:207px;width:15.0px;height:23px;background:#2d2d2d"></div>
<div class="a" style="left:1148.6px;top:207px;width:15.0px;height:23px;background:#2d2d2d"></div>
<div class="a" style="left:1164.8px;top:207px;width:15.0px;height:23px;background:#2d2d2d"></div>
<div class="a" style="left:1181.1px;top:207px;width:15.0px;height:23px;background:#2d2d2d"></div>
<div class="a" style="left:1197.3px;top:207px;width:15.0px;height:23px;background:#3a3a3a"></div>
<div class="a" style="left:1213.5px;top:207px;width:15.0px;height:23px;background:#2d2d2d"></div>
<div class="a" style="left:1229.7px;top:207px;width:15.0px;height:23px;background:#2d2d2d"></div>
<div class="a" style="left:1245.9px;top:207px;width:15.0px;height:23px;background:#2d2d2d"></div>
<div class="a" style="left:1262.2px;top:207px;width:15.0px;height:23px;background:#2d2d2d"></div>
<div class="a" style="left:1278.4px;top:207px;width:15.0px;height:23px;background:#3a3a3a"></div>
<div class="a" style="left:483.6px;top:231px;width:15.0px;height:23px;background:#6a6a6a"></div>
<div class="a" style="left:499.8px;top:231px;width:15.0px;height:23px;background:#2d2d2d"></div>
<div class="a" style="left:516.0px;top:231px;width:15.0px;height:23px;background:#2d2d2d"></div>
<div class="a" style="left:532.3px;top:231px;width:15.0px;height:23px;background:#2d2d2d"></div>
<div class="a" style="left:548.5px;top:231px;width:15.0px;height:23px;background:#3a3a3a"></div>
<div class="a" style="left:564.7px;top:231px;width:15.0px;height:23px;background:#2d2d2d"></div>
<div class="a" style="left:580.9px;top:231px;width:15.0px;height:23px;background:#2d2d2d"></div>
<div class="a" style="left:597.1px;top:231px;width:15.0px;height:23px;background:#2d2d2d"></div>
<div class="a" style="left:613.4px;top:231px;width:15.0px;height:23px;background:#2d2d2d"></div>
<div class="a" style="left:629.6px;top:231px;width:15.0px;height:23px;background:#3a3a3a"></div>
<div class="a" style="left:645.8px;top:231px;width:15.0px;height:23px;background:#2d2d2d"></div>
<div class="a" style="left:662.0px;top:231px;width:15.0px;height:23px;background:#2d2d2d"></div>
<div class="a" style="left:678.2px;top:231px;width:15.0px;height:23px;background:#2d2d2d"></div>
<div class="a" style="left:694.5px;top:231px;width:15.0px;height:23px;background:#2d2d2d"></div>
<div class="a" style="left:710.7px;top:231px;width:15.0px;height:23px;background:#3a3a3a"></div>
<div class="a" style="left:726.9px;top:231px;width:15.0px;height:23px;background:#2d2d2d"></div>
<div class="a" style="left:743.1px;top:231px;width:15.0px;height:23px;background:#2d2d2d"></div>
<div class="a" style="left:759.3px;top:231px;width:15.0px;height:23px;background:#2d2d2d"></div>
<div class="a" style="left:775.6px;top:231px;width:15.0px;height:23px;background:#2d2d2d"></div>
<div class="a" style="left:791.8px;top:231px;width:15.0px;height:23px;background:#3a3a3a"></div>
<div class="a" style="left:808.0px;top:231px;width:15.0px;height:23px;background:#2d2d2d"></div>
<div class="a" style="left:824.2px;top:231px;width:15.0px;height:23px;background:#2d2d2d"></div>
<div class="a" style="left:840.4px;top:231px;width:15.0px;height:23px;background:#2d2d2d"></div>
<div class="a" style="left:856.7px;top:231px;width:15.0px;height:23px;background:#2d2d2d"></div>
<div class="a" style="left:872.9px;top:231px;width:15.0px;height:23px;background:#3a3a3a"></div>
<div class="a" style="left:889.1px;top:231px;width:15.0px;height:23px;background:#2d2d2d"></div>
<div class="a" style="left:905.3px;top:231px;width:15.0px;height:23px;background:#2d2d2d"></div>
<div class="a" style="left:921.5px;top:231px;width:15.0px;height:23px;background:#2d2d2d"></div>
<div class="a" style="left:937.8px;top:231px;width:15.0px;height:23px;background:#2d2d2d"></div>
<div class="a" style="left:954.0px;top:231px;width:15.0px;height:23px;background:#3a3a3a"></div>
<div class="a" style="left:970.2px;top:231px;width:15.0px;height:23px;background:#2d2d2d"></div>
<div class="a" style="left:986.4px;top:231px;width:15.0px;height:23px;background:#2d2d2d"></div>
<div class="a" style="left:1002.6px;top:231px;width:15.0px;height:23px;background:#2d2d2d"></div>
<div class="a" style="left:1018.9px;top:231px;width:15.0px;height:23px;background:#2d2d2d"></div>
<div class="a" style="left:1035.1px;top:231px;width:15.0px;height:23px;background:#3a3a3a"></div>
<div class="a" style="left:1051.3px;top:231px;width:15.0px;height:23px;background:#2d2d2d"></div>
<div class="a" style="left:1067.5px;top:231px;width:15.0px;height:23px;background:#2d2d2d"></div>
<div class="a" style="left:1083.7px;top:231px;width:15.0px;height:23px;background:#2d2d2d"></div>
<div class="a" style="left:1100.0px;top:231px;width:15.0px;height:23px;background:#2d2d2d"></div>
<div class="a" style="left:1116.2px;top:231px;width:15.0px;height:23px;background:#3a3a3a"></div>
<div class="a" style="left:1132.4px;top:231px;width:15.0px;height:23px;background:#2d2d2d"></div>
<div class="a" style="left:1148.6px;top:231px;width:15.0px;height:23px;background:#2d2d2d"></div>
<div class="a" style="left:1164.8px;top:231px;width:15.0px;height:23px;background:#2d2d2d"></div>
<div class="a" style="left:1181.1px;top:231px;width:15.0px;height:23px;background:#2d2d2d"></div>
<div class="a" style="left:1197.3px;top:231px;width:15.0px;height:23px;background:#3a3a3a"></div>
<div class="a" style="left:1213.5px;top:231px;width:15.0px;height:23px;background:#2d2d2d"></div>
<div class="a" style="left:1229.7px;top:231px;width:15.0px;height:23px;background:#2d2d2d"></div>
<div class="a" style="left:1245.9px;top:231px;width:15.0px;height:23px;background:#2d2d2d"></div>
<div class="a" style="left:1262.2px;top:231px;width:15.0px;height:23px;background:#2d2d2d"></div>
<div class="a" style="left:1278.4px;top:231px;width:15.0px;height:23px;background:#3a3a3a"></div>
<div class="a" style="left:483.6px;top:255px;width:15.0px;height:9px;background:#6a6a6a"></div>
<div class="a" style="left:499.8px;top:255px;width:15.0px;height:9px;background:#2d2d2d"></div>
<div class="a" style="left:516.0px;top:255px;width:15.0px;height:9px;background:#2d2d2d"></div>
<div class="a" style="left:532.3px;top:255px;width:15.0px;height:9px;background:#2d2d2d"></div>
<div class="a" style="left:548.5px;top:255px;width:15.0px;height:9px;background:#3a3a3a"></div>
<div class="a" style="left:564.7px;top:255px;width:15.0px;height:9px;background:#2d2d2d"></div>
<div class="a" style="left:580.9px;top:255px;width:15.0px;height:9px;background:#2d2d2d"></div>
<div class="a" style="left:597.1px;top:255px;width:15.0px;height:9px;background:#2d2d2d"></div>
<div class="a" style="left:613.4px;top:255px;width:15.0px;height:9px;background:#2d2d2d"></div>
<div class="a" style="left:629.6px;top:255px;width:15.0px;height:9px;background:#3a3a3a"></div>
<div class="a" style="left:645.8px;top:255px;width:15.0px;height:9px;background:#2d2d2d"></div>
<div class="a" style="left:662.0px;top:255px;width:15.0px;height:9px;background:#2d2d2d"></div>
<div class="a" style="left:678.2px;top:255px;width:15.0px;height:9px;background:#2d2d2d"></div>
<div class="a" style="left:694.5px;top:255px;width:15.0px;height:9px;background:#2d2d2d"></div>
<div class="a" style="left:710.7px;top:255px;width:15.0px;height:9px;background:#3a3a3a"></div>
<div class="a" style="left:726.9px;top:255px;width:15.0px;height:9px;background:#2d2d2d"></div>
<div class="a" style="left:743.1px;top:255px;width:15.0px;height:9px;background:#2d2d2d"></div>
<div class="a" style="left:759.3px;top:255px;width:15.0px;height:9px;background:#2d2d2d"></div>
<div class="a" style="left:775.6px;top:255px;width:15.0px;height:9px;background:#2d2d2d"></div>
<div class="a" style="left:791.8px;top:255px;width:15.0px;height:9px;background:#3a3a3a"></div>
<div class="a" style="left:808.0px;top:255px;width:15.0px;height:9px;background:#2d2d2d"></div>
<div class="a" style="left:824.2px;top:255px;width:15.0px;height:9px;background:#2d2d2d"></div>
<div class="a" style="left:840.4px;top:255px;width:15.0px;height:9px;background:#2d2d2d"></div>
<div class="a" style="left:856.7px;top:255px;width:15.0px;height:9px;background:#2d2d2d"></div>
<div class="a" style="left:872.9px;top:255px;width:15.0px;height:9px;background:#3a3a3a"></div>
<div class="a" style="left:889.1px;top:255px;width:15.0px;height:9px;background:#2d2d2d"></div>
<div class="a" style="left:905.3px;top:255px;width:15.0px;height:9px;background:#2d2d2d"></div>
<div class="a" style="left:921.5px;top:255px;width:15.0px;height:9px;background:#2d2d2d"></div>
<div class="a" style="left:937.8px;top:255px;width:15.0px;height:9px;background:#2d2d2d"></div>
<div class="a" style="left:954.0px;top:255px;width:15.0px;height:9px;background:#3a3a3a"></div>
<div class="a" style="left:970.2px;top:255px;width:15.0px;height:9px;background:#2d2d2d"></div>
<div class="a" style="left:986.4px;top:255px;width:15.0px;height:9px;background:#2d2d2d"></div>
<div class="a" style="left:1002.6px;top:255px;width:15.0px;height:9px;background:#2d2d2d"></div>
<div class="a" style="left:1018.9px;top:255px;width:15.0px;height:9px;background:#2d2d2d"></div>
<div class="a" style="left:1035.1px;top:255px;width:15.0px;height:9px;background:#3a3a3a"></div>
<div class="a" style="left:1051.3px;top:255px;width:15.0px;height:9px;background:#2d2d2d"></div>
<div class="a" style="left:1067.5px;top:255px;width:15.0px;height:9px;background:#2d2d2d"></div>
<div class="a" style="left:1083.7px;top:255px;width:15.0px;height:9px;background:#2d2d2d"></div>
<div class="a" style="left:1100.0px;top:255px;width:15.0px;height:9px;background:#2d2d2d"></div>
<div class="a" style="left:1116.2px;top:255px;width:15.0px;height:9px;background:#3a3a3a"></div>
<div class="a" style="left:1132.4px;top:255px;width:15.0px;height:9px;background:#2d2d2d"></div>
<div class="a" style="left:1148.6px;top:255px;width:15.0px;height:9px;background:#2d2d2d"></div>
<div class="a" style="left:1164.8px;top:255px;width:15.0px;height:9px;background:#2d2d2d"></div>
<div class="a" style="left:1181.1px;top:255px;width:15.0px;height:9px;background:#2d2d2d"></div>
<div class="a" style="left:1197.3px;top:255px;width:15.0px;height:9px;background:#3a3a3a"></div>
<div class="a" style="left:1213.5px;top:255px;width:15.0px;height:9px;background:#2d2d2d"></div>
<div class="a" style="left:1229.7px;top:255px;width:15.0px;height:9px;background:#2d2d2d"></div>
<div class="a" style="left:1245.9px;top:255px;width:15.0px;height:9px;background:#2d2d2d"></div>
<div class="a" style="left:1262.2px;top:255px;width:15.0px;height:9px;background:#2d2d2d"></div>
<div class="a" style="left:1278.4px;top:255px;width:15.0px;height:9px;background:#3a3a3a"></div>
<svg style="left:485px;top:190px" width="12" height="11" viewBox="0 0 12 11"><ellipse cx="5.5" cy="5.5" rx="4" ry="4" fill="#1a1a1a"/></svg>
<svg style="left:485px;top:213px" width="12" height="11" viewBox="0 0 12 11"><ellipse cx="5.5" cy="5.5" rx="3.7" ry="3.5" stroke="#2a2a2a" stroke-width="1" fill="none"/></svg>
<svg style="left:485px;top:237px" width="12" height="11" viewBox="0 0 12 11"><ellipse cx="5.5" cy="5.5" rx="3.7" ry="3.5" stroke="#2a2a2a" stroke-width="1" fill="none"/></svg>
<svg style="left:483px;top:132px" width="16" height="133" viewBox="0 0 16 133"><path d="M0.5 0.5 H15 V42 L7.7 50 L0.5 42 Z" fill="#3b7fd4"/><rect x="6.7" y="48" width="2" height="85" fill="#3b82d8"/></svg>
<div class="a" style="left:65px;top:184px;width:416px;height:22px;background:#36609a"></div>
<div class="a" style="left:65px;top:206px;width:416px;height:1px;background:#262626"></div>
<div class="a" style="left:65px;top:230px;width:416px;height:1px;background:#262626"></div>
<div class="a" style="left:65px;top:254px;width:416px;height:1px;background:#262626"></div>
<svg style="left:102px;top:187px" width="16" height="15" viewBox="0 0 16 15"><path d="M2.5 0.8 H13 Q14.6 0.8 14.6 2.4 V12.6 Q14.6 14.2 13 14.2 H6.2 L0.8 8.8 V2.4 Q0.8 0.8 2.5 0.8 Z" fill="#666" stroke="#c8c8c8" stroke-width="1.1"/><path d="M0.8 8.8 H4.8 Q6.2 8.8 6.2 10.2 V14.2 Z" fill="#777" stroke="#c8c8c8" stroke-width="1.1" stroke-linejoin="round"/></svg>
<div class="t" style="left:131px;top:190px;font-size:13px;color:#f2f2f2">Layer_4</div>
<div class="a" style="left:382px;top:187px;width:8px;height:15px;background:#ff4dff"></div>
<svg style="left:102px;top:211px" width="16" height="15" viewBox="0 0 16 15"><path d="M2.5 0.8 H13 Q14.6 0.8 14.6 2.4 V12.6 Q14.6 14.2 13 14.2 H6.2 L0.8 8.8 V2.4 Q0.8 0.8 2.5 0.8 Z" fill="#666" stroke="#c8c8c8" stroke-width="1.1"/><path d="M0.8 8.8 H4.8 Q6.2 8.8 6.2 10.2 V14.2 Z" fill="#777" stroke="#c8c8c8" stroke-width="1.1" stroke-linejoin="round"/></svg>
<div class="t" style="left:131px;top:214px;font-size:13px;color:#d6d6d6">Layer_9</div>
<div class="a" style="left:382px;top:211px;width:8px;height:15px;background:#00f2ff"></div>
<svg style="left:102px;top:235px" width="16" height="15" viewBox="0 0 16 15"><path d="M2.5 0.8 H13 Q14.6 0.8 14.6 2.4 V12.6 Q14.6 14.2 13 14.2 H6.2 L0.8 8.8 V2.4 Q0.8 0.8 2.5 0.8 Z" fill="#666" stroke="#c8c8c8" stroke-width="1.1"/><path d="M0.8 8.8 H4.8 Q6.2 8.8 6.2 10.2 V14.2 Z" fill="#777" stroke="#c8c8c8" stroke-width="1.1" stroke-linejoin="round"/></svg>
<div class="t" style="left:131px;top:238px;font-size:13px;color:#d6d6d6">window3</div>
<div class="a" style="left:382px;top:235px;width:8px;height:15px;background:#ff0000"></div>
<div class="a" style="left:382px;top:258px;width:8px;height:6px;background:#ff0000"></div>
<svg style="left:103px;top:259px" width="16" height="5" viewBox="0 0 16 5"><path d="M0.8 5 V2.4 Q0.8 0.8 2.5 0.8 H13 Q14.6 0.8 14.6 2.4 V5" fill="#666" stroke="#c8c8c8" stroke-width="1.1"/></svg>
<div class="t" style="left:131px;top:262px;font-size:13px;color:#d6d6d6;height:2px;overflow:hidden">Layer_1</div>
<div class="a" style="left:65px;top:264px;width:1250px;height:1px;background:#292929"></div>
<div class="a" style="left:1302px;top:185px;width:5px;height:30px;border-radius:3px;background:#6a6a6a"></div>
<div class="a" style="left:484px;top:272px;width:73px;height:5px;border-radius:3px;background:#6a6a6a"></div>
<!-- DOCUMENT AREA -->
<div class="a" style="left:65px;top:289px;width:1250px;height:731px;background:#323232"></div>

<div class="a" style="left:65px;top:289px;width:1250px;height:24px;background:#2c2c2c"></div>
<div class="a" style="left:65px;top:289px;width:117px;height:24px;background:#323232;border-right:1px solid #2a2a2a"></div>
<div class="t" style="left:77px;top:294px;font-size:12.5px;font-weight:700;color:#f2f2f2">house 3.fla</div>
<svg style="left:159px;top:297px" width="9" height="9" viewBox="0 0 9 9"><path d="M0.5 0.5 L8.5 8.5 M8.5 0.5 L0.5 8.5" stroke="#c0c0c0" stroke-width="1"/></svg>
<svg style="left:85px;top:325px" width="23" height="23" viewBox="0 0 23 23"><circle cx="10.5" cy="5.5" r="5" fill="#c6c6c6"/><circle cx="5" cy="12" r="5" fill="#c6c6c6"/><circle cx="16" cy="12" r="5" fill="#c6c6c6"/><path d="M10.5 9 C10.5 15, 8 18.5, 4.5 20.5 H16.5 C13 18.5, 10.5 15, 10.5 9Z" fill="#c6c6c6"/><path d="M22 18 V22 H18 Z" fill="#c6c6c6"/></svg>
<div class="a" style="left:125px;top:321px;width:1px;height:28px;background:#444"></div>
<div class="t" style="left:151px;top:329px;font-size:15px;color:#dcdcdc">Scene 1</div>
<svg style="left:237px;top:331px" width="14" height="9" viewBox="0 0 14 9"><path d="M1.5 1.5 L7 7 L12.5 1.5" stroke="#e0e0e0" stroke-width="2" fill="none"/></svg>
<svg style="left:1065px;top:325px" width="20" height="20" viewBox="0 0 20 20"><rect x="4.5" y="4.5" width="10" height="10" stroke="#c6c6c6" stroke-width="1.3" fill="none"/><path d="M9.5 0 V19 M0 9.5 H19" stroke="#c6c6c6" stroke-width="1.3"/></svg>
<svg style="left:1104px;top:324px" width="24" height="23" viewBox="0 0 24 23"><path d="M2.2 6.5 C2 3.5, 4.5 2, 8 2.5" stroke="#c6c6c6" stroke-width="1.4" fill="none"/><path d="M6.5 0.3 L9.8 2.7 L6.8 5 Z" fill="#c6c6c6"/><path d="M11.5 4.5 L22.5 13.5 L15.8 20" stroke="#c6c6c6" stroke-width="1.3" fill="none"/><path d="M5.8 14 L5.5 8.5 M8 13 L8.2 6.5 M10.3 13 L11 7.8 M12.3 14 L13.8 10" stroke="#c6c6c6" stroke-width="1.7" stroke-linecap="round"/><path d="M5 12.5 H13 L12.5 17 C12 20, 10.5 22, 8.8 22 C6.8 22, 5.3 20.8, 4 19 L1.3 15.2 C0.6 14.2, 1.8 13.2, 2.8 14 L5 15.5 Z" fill="#c6c6c6"/></svg>
<svg style="left:1145px;top:325px" width="21" height="21" viewBox="0 0 21 21"><defs><clipPath id="cpc"><rect x="0" y="0" width="20.5" height="20.5" rx="1.5"/></clipPath></defs><g clip-path="url(#cpc)" stroke="#8a8a8a" stroke-width="1.3"><path d="M-20 21 L1 0"/><path d="M-16 21 L5 0"/><path d="M-12 21 L9 0"/><path d="M-8 21 L13 0"/><path d="M-4 21 L17 0"/><path d="M0 21 L21 0"/><path d="M4 21 L25 0"/><path d="M8 21 L29 0"/><path d="M12 21 L33 0"/><path d="M16 21 L37 0"/><path d="M20 21 L41 0"/></g><rect x="4.5" y="4.5" width="11.5" height="11.5" stroke="#d0d0d0" stroke-width="1.6" fill="#323232"/></svg>
<div class="a" style="left:1180px;top:320px;width:125px;height:31px;background:#393939;border-radius:3px"></div>
<svg style="left:1185px;top:324px" width="11" height="23" viewBox="0 0 11 23"><path d="M1 6 L5.5 1.5 L10 6 M1 17 L5.5 21.5 L10 17" stroke="#bdbdbd" stroke-width="1.1" fill="none"/></svg>
<div class="a" style="left:1202px;top:321px;width:82px;height:29px;background:#262626;border:1px solid #2e2e2e"></div>
<div class="t" style="left:1219px;top:328px;font-size:15.5px;color:#e0e0e0">17%</div>
<svg style="left:1288px;top:331px" width="11" height="7" viewBox="0 0 11 7"><path d="M0.5 0.5 L5.5 5.5 L10.5 0.5" stroke="#bdbdbd" stroke-width="1.1" fill="none"/></svg>
<div class="a" style="left:85px;top:376px;width:1230px;height:644px;background:#262626"></div>
<div class="a" style="left:65px;top:357px;width:1250px;height:19px;background:#404040"></div>
<div class="a" style="left:65px;top:376px;width:20px;height:644px;background:#404040"></div>
<div class="a" style="left:85px;top:376px;width:1230px;height:4px;background:#1f1f1f"></div>
<div class="a" style="left:85px;top:380px;width:1210px;height:1px;background:#3fb8c4"></div><div class="a" style="left:85px;top:381px;width:1210px;height:1px;background:#2f7f88"></div>
<div class="a" style="left:89px;top:358px;width:1px;height:18px;background:#d4d4d4"></div>
<div class="t" style="left:92.4px;top:360px;font-size:12px;color:#dcdcdc;letter-spacing:-0.2px">1000</div>
<div class="a" style="left:99px;top:374px;width:1px;height:2px;background:#d4d4d4"></div>
<div class="a" style="left:110px;top:371px;width:1px;height:5px;background:#d4d4d4"></div>
<div class="a" style="left:120px;top:374px;width:1px;height:2px;background:#d4d4d4"></div>
<div class="a" style="left:131px;top:371px;width:1px;height:5px;background:#d4d4d4"></div>
<div class="a" style="left:141px;top:374px;width:1px;height:2px;background:#d4d4d4"></div>
<div class="a" style="left:152px;top:371px;width:1px;height:5px;background:#d4d4d4"></div>
<div class="a" style="left:162px;top:374px;width:1px;height:2px;background:#d4d4d4"></div>
<div class="a" style="left:172px;top:371px;width:1px;height:5px;background:#d4d4d4"></div>
<div class="a" style="left:183px;top:374px;width:1px;height:2px;background:#d4d4d4"></div>
<div class="a" style="left:193px;top:358px;width:1px;height:18px;background:#d4d4d4"></div>
<div class="t" style="left:196.8px;top:360px;font-size:12px;color:#dcdcdc;letter-spacing:-0.2px">500</div>
<div class="a" style="left:204px;top:374px;width:1px;height:2px;background:#d4d4d4"></div>
<div class="a" style="left:214px;top:371px;width:1px;height:5px;background:#d4d4d4"></div>
<div class="a" style="left:225px;top:374px;width:1px;height:2px;background:#d4d4d4"></div>
<div class="a" style="left:235px;top:371px;width:1px;height:5px;background:#d4d4d4"></div>
<div class="a" style="left:246px;top:374px;width:1px;height:2px;background:#d4d4d4"></div>
<div class="a" style="left:256px;top:371px;width:1px;height:5px;background:#d4d4d4"></div>
<div class="a" style="left:266px;top:374px;width:1px;height:2px;background:#d4d4d4"></div>
<div class="a" style="left:277px;top:371px;width:1px;height:5px;background:#d4d4d4"></div>
<div class="a" style="left:287px;top:374px;width:1px;height:2px;background:#d4d4d4"></div>
<div class="a" style="left:298px;top:358px;width:1px;height:18px;background:#d4d4d4"></div>
<div class="t" style="left:301.2px;top:360px;font-size:12px;color:#dcdcdc;letter-spacing:-0.2px">0</div>
<div class="a" style="left:308px;top:374px;width:1px;height:2px;background:#d4d4d4"></div>
<div class="a" style="left:319px;top:371px;width:1px;height:5px;background:#d4d4d4"></div>
<div class="a" style="left:329px;top:374px;width:1px;height:2px;background:#d4d4d4"></div>
<div class="a" style="left:340px;top:371px;width:1px;height:5px;background:#d4d4d4"></div>
<div class="a" style="left:350px;top:374px;width:1px;height:2px;background:#d4d4d4"></div>
<div class="a" style="left:360px;top:371px;width:1px;height:5px;background:#d4d4d4"></div>
<div class="a" style="left:371px;top:374px;width:1px;height:2px;background:#d4d4d4"></div>
<div class="a" style="left:381px;top:371px;width:1px;height:5px;background:#d4d4d4"></div>
<div class="a" style="left:392px;top:374px;width:1px;height:2px;background:#d4d4d4"></div>
<div class="a" style="left:402px;top:358px;width:1px;height:18px;background:#d4d4d4"></div>
<div class="t" style="left:405.6px;top:360px;font-size:12px;color:#dcdcdc;letter-spacing:-0.2px">500</div>
<div class="a" style="left:412px;top:374px;width:1px;height:2px;background:#d4d4d4"></div>
<div class="a" style="left:423px;top:371px;width:1px;height:5px;background:#d4d4d4"></div>
<div class="a" style="left:433px;top:374px;width:1px;height:2px;background:#d4d4d4"></div>
<div class="a" style="left:444px;top:371px;width:1px;height:5px;background:#d4d4d4"></div>
<div class="a" style="left:454px;top:374px;width:1px;height:2px;background:#d4d4d4"></div>
<div class="a" style="left:465px;top:371px;width:1px;height:5px;background:#d4d4d4"></div>
<div class="a" style="left:475px;top:374px;width:1px;height:2px;background:#d4d4d4"></div>
<div class="a" style="left:486px;top:371px;width:1px;height:5px;background:#d4d4d4"></div>
<div class="a" style="left:496px;top:374px;width:1px;height:2px;background:#d4d4d4"></div>
<div class="a" style="left:506px;top:358px;width:1px;height:18px;background:#d4d4d4"></div>
<div class="t" style="left:510.0px;top:360px;font-size:12px;color:#dcdcdc;letter-spacing:-0.2px">1000</div>
<div class="a" style="left:517px;top:374px;width:1px;height:2px;background:#d4d4d4"></div>
<div class="a" style="left:527px;top:371px;width:1px;height:5px;background:#d4d4d4"></div>
<div class="a" style="left:538px;top:374px;width:1px;height:2px;background:#d4d4d4"></div>
<div class="a" style="left:548px;top:371px;width:1px;height:5px;background:#d4d4d4"></div>
<div class="a" style="left:559px;top:374px;width:1px;height:2px;background:#d4d4d4"></div>
<div class="a" style="left:569px;top:371px;width:1px;height:5px;background:#d4d4d4"></div>
<div class="a" style="left:580px;top:374px;width:1px;height:2px;background:#d4d4d4"></div>
<div class="a" style="left:590px;top:371px;width:1px;height:5px;background:#d4d4d4"></div>
<div class="a" style="left:600px;top:374px;width:1px;height:2px;background:#d4d4d4"></div>
<div class="a" style="left:611px;top:358px;width:1px;height:18px;background:#d4d4d4"></div>
<div class="t" style="left:614.4px;top:360px;font-size:12px;color:#dcdcdc;letter-spacing:-0.2px">1500</div>
<div class="a" style="left:621px;top:374px;width:1px;height:2px;background:#d4d4d4"></div>
<div class="a" style="left:632px;top:371px;width:1px;height:5px;background:#d4d4d4"></div>
<div class="a" style="left:642px;top:374px;width:1px;height:2px;background:#d4d4d4"></div>
<div class="a" style="left:653px;top:371px;width:1px;height:5px;background:#d4d4d4"></div>
<div class="a" style="left:663px;top:374px;width:1px;height:2px;background:#d4d4d4"></div>
<div class="a" style="left:674px;top:371px;width:1px;height:5px;background:#d4d4d4"></div>
<div class="a" style="left:684px;top:374px;width:1px;height:2px;background:#d4d4d4"></div>
<div class="a" style="left:694px;top:371px;width:1px;height:5px;background:#d4d4d4"></div>
<div class="a" style="left:705px;top:374px;width:1px;height:2px;background:#d4d4d4"></div>
<div class="a" style="left:715px;top:358px;width:1px;height:18px;background:#d4d4d4"></div>
<div class="t" style="left:718.7px;top:360px;font-size:12px;color:#dcdcdc;letter-spacing:-0.2px">2000</div>
<div class="a" style="left:726px;top:374px;width:1px;height:2px;background:#d4d4d4"></div>
<div class="a" style="left:736px;top:371px;width:1px;height:5px;background:#d4d4d4"></div>
<div class="a" style="left:747px;top:374px;width:1px;height:2px;background:#d4d4d4"></div>
<div class="a" style="left:757px;top:371px;width:1px;height:5px;background:#d4d4d4"></div>
<div class="a" style="left:767px;top:374px;width:1px;height:2px;background:#d4d4d4"></div>
<div class="a" style="left:778px;top:371px;width:1px;height:5px;background:#d4d4d4"></div>
<div class="a" style="left:788px;top:374px;width:1px;height:2px;background:#d4d4d4"></div>
<div class="a" style="left:799px;top:371px;width:1px;height:5px;background:#d4d4d4"></div>
<div class="a" style="left:809px;top:374px;width:1px;height:2px;background:#d4d4d4"></div>
<div class="a" style="left:820px;top:358px;width:1px;height:18px;background:#d4d4d4"></div>
<div class="t" style="left:823.1px;top:360px;font-size:12px;color:#dcdcdc;letter-spacing:-0.2px">2500</div>
<div class="a" style="left:830px;top:374px;width:1px;height:2px;background:#d4d4d4"></div>
<div class="a" style="left:840px;top:371px;width:1px;height:5px;background:#d4d4d4"></div>
<div class="a" style="left:851px;top:374px;width:1px;height:2px;background:#d4d4d4"></div>
<div class="a" style="left:861px;top:371px;width:1px;height:5px;background:#d4d4d4"></div>
<div class="a" style="left:872px;top:374px;width:1px;height:2px;background:#d4d4d4"></div>
<div class="a" style="left:882px;top:371px;width:1px;height:5px;background:#d4d4d4"></div>
<div class="a" style="left:893px;top:374px;width:1px;height:2px;background:#d4d4d4"></div>
<div class="a" style="left:903px;top:371px;width:1px;height:5px;background:#d4d4d4"></div>
<div class="a" style="left:914px;top:374px;width:1px;height:2px;background:#d4d4d4"></div>
<div class="a" style="left:924px;top:358px;width:1px;height:18px;background:#d4d4d4"></div>
<div class="t" style="left:927.5px;top:360px;font-size:12px;color:#dcdcdc;letter-spacing:-0.2px">3000</div>
<div class="a" style="left:934px;top:374px;width:1px;height:2px;background:#d4d4d4"></div>
<div class="a" style="left:945px;top:371px;width:1px;height:5px;background:#d4d4d4"></div>
<div class="a" style="left:955px;top:374px;width:1px;height:2px;background:#d4d4d4"></div>
<div class="a" style="left:966px;top:371px;width:1px;height:5px;background:#d4d4d4"></div>
<div class="a" style="left:976px;top:374px;width:1px;height:2px;background:#d4d4d4"></div>
<div class="a" style="left:987px;top:371px;width:1px;height:5px;background:#d4d4d4"></div>
<div class="a" style="left:997px;top:374px;width:1px;height:2px;background:#d4d4d4"></div>
<div class="a" style="left:1008px;top:371px;width:1px;height:5px;background:#d4d4d4"></div>
<div class="a" style="left:1018px;top:374px;width:1px;height:2px;background:#d4d4d4"></div>
<div class="a" style="left:1028px;top:358px;width:1px;height:18px;background:#d4d4d4"></div>
<div class="t" style="left:1031.9px;top:360px;font-size:12px;color:#dcdcdc;letter-spacing:-0.2px">3500</div>
<div class="a" style="left:1039px;top:374px;width:1px;height:2px;background:#d4d4d4"></div>
<div class="a" style="left:1049px;top:371px;width:1px;height:5px;background:#d4d4d4"></div>
<div class="a" style="left:1060px;top:374px;width:1px;height:2px;background:#d4d4d4"></div>
<div class="a" style="left:1070px;top:371px;width:1px;height:5px;background:#d4d4d4"></div>
<div class="a" style="left:1081px;top:374px;width:1px;height:2px;background:#d4d4d4"></div>
<div class="a" style="left:1091px;top:371px;width:1px;height:5px;background:#d4d4d4"></div>
<div class="a" style="left:1102px;top:374px;width:1px;height:2px;background:#d4d4d4"></div>
<div class="a" style="left:1112px;top:371px;width:1px;height:5px;background:#d4d4d4"></div>
<div class="a" style="left:1122px;top:374px;width:1px;height:2px;background:#d4d4d4"></div>
<div class="a" style="left:1133px;top:358px;width:1px;height:18px;background:#d4d4d4"></div>
<div class="t" style="left:1136.3px;top:360px;font-size:12px;color:#dcdcdc;letter-spacing:-0.2px">4000</div>
<div class="a" style="left:1143px;top:374px;width:1px;height:2px;background:#d4d4d4"></div>
<div class="a" style="left:1154px;top:371px;width:1px;height:5px;background:#d4d4d4"></div>
<div class="a" style="left:1164px;top:374px;width:1px;height:2px;background:#d4d4d4"></div>
<div class="a" style="left:1174px;top:371px;width:1px;height:5px;background:#d4d4d4"></div>
<div class="a" style="left:1185px;top:374px;width:1px;height:2px;background:#d4d4d4"></div>
<div class="a" style="left:1195px;top:371px;width:1px;height:5px;background:#d4d4d4"></div>
<div class="a" style="left:1206px;top:374px;width:1px;height:2px;background:#d4d4d4"></div>
<div class="a" style="left:1216px;top:371px;width:1px;height:5px;background:#d4d4d4"></div>
<div class="a" style="left:1227px;top:374px;width:1px;height:2px;background:#d4d4d4"></div>
<div class="a" style="left:1237px;top:358px;width:1px;height:18px;background:#d4d4d4"></div>
<div class="t" style="left:1240.7px;top:360px;font-size:12px;color:#dcdcdc;letter-spacing:-0.2px">4500</div>
<div class="a" style="left:1248px;top:374px;width:1px;height:2px;background:#d4d4d4"></div>
<div class="a" style="left:1258px;top:371px;width:1px;height:5px;background:#d4d4d4"></div>
<div class="a" style="left:1268px;top:374px;width:1px;height:2px;background:#d4d4d4"></div>
<div class="a" style="left:1279px;top:371px;width:1px;height:5px;background:#d4d4d4"></div>
<div class="a" style="left:1289px;top:374px;width:1px;height:2px;background:#d4d4d4"></div>
<div class="a" style="left:1300px;top:371px;width:1px;height:5px;background:#d4d4d4"></div>
<div class="a" style="left:1310px;top:374px;width:1px;height:2px;background:#d4d4d4"></div>
<div class="a" style="left:79px;top:386px;width:6px;height:1px;background:#d4d4d4"></div>
<div class="a" style="left:82px;top:397px;width:3px;height:1px;background:#d4d4d4"></div>
<div class="a" style="left:79px;top:407px;width:6px;height:1px;background:#d4d4d4"></div>
<div class="a" style="left:82px;top:418px;width:3px;height:1px;background:#d4d4d4"></div>
<div class="a" style="left:66px;top:428px;width:19px;height:1px;background:#d4d4d4"></div>
<div class="t" style="left:66px;top:429.5px;font-size:12px;color:#dcdcdc;transform-origin:0 0;transform:translate(0,0) rotate(-90deg) translate(-100%,0);"><span style="display:inline-block">0</span></div>
<div class="a" style="left:82px;top:438px;width:3px;height:1px;background:#d4d4d4"></div>
<div class="a" style="left:79px;top:449px;width:6px;height:1px;background:#d4d4d4"></div>
<div class="a" style="left:82px;top:459px;width:3px;height:1px;background:#d4d4d4"></div>
<div class="a" style="left:79px;top:470px;width:6px;height:1px;background:#d4d4d4"></div>
<div class="a" style="left:82px;top:480px;width:3px;height:1px;background:#d4d4d4"></div>
<div class="a" style="left:79px;top:491px;width:6px;height:1px;background:#d4d4d4"></div>
<div class="a" style="left:82px;top:501px;width:3px;height:1px;background:#d4d4d4"></div>
<div class="a" style="left:79px;top:512px;width:6px;height:1px;background:#d4d4d4"></div>
<div class="a" style="left:82px;top:522px;width:3px;height:1px;background:#d4d4d4"></div>
<div class="a" style="left:66px;top:532px;width:19px;height:1px;background:#d4d4d4"></div>
<div class="t" style="left:66px;top:533.9px;font-size:12px;color:#dcdcdc;transform-origin:0 0;transform:translate(0,0) rotate(-90deg) translate(-100%,0);"><span style="display:inline-block">500</span></div>
<div class="a" style="left:82px;top:543px;width:3px;height:1px;background:#d4d4d4"></div>
<div class="a" style="left:79px;top:553px;width:6px;height:1px;background:#d4d4d4"></div>
<div class="a" style="left:82px;top:564px;width:3px;height:1px;background:#d4d4d4"></div>
<div class="a" style="left:79px;top:574px;width:6px;height:1px;background:#d4d4d4"></div>
<div class="a" style="left:82px;top:585px;width:3px;height:1px;background:#d4d4d4"></div>
<div class="a" style="left:79px;top:595px;width:6px;height:1px;background:#d4d4d4"></div>
<div class="a" style="left:82px;top:606px;width:3px;height:1px;background:#d4d4d4"></div>
<div class="a" style="left:79px;top:616px;width:6px;height:1px;background:#d4d4d4"></div>
<div class="a" style="left:82px;top:626px;width:3px;height:1px;background:#d4d4d4"></div>
<div class="a" style="left:66px;top:637px;width:19px;height:1px;background:#d4d4d4"></div>
<div class="t" style="left:66px;top:638.3px;font-size:12px;color:#dcdcdc;transform-origin:0 0;transform:translate(0,0) rotate(-90deg) translate(-100%,0);"><span style="display:inline-block">1000</span></div>
<div class="a" style="left:82px;top:647px;width:3px;height:1px;background:#d4d4d4"></div>
<div class="a" style="left:79px;top:658px;width:6px;height:1px;background:#d4d4d4"></div>
<div class="a" style="left:82px;top:668px;width:3px;height:1px;background:#d4d4d4"></div>
<div class="a" style="left:79px;top:678px;width:6px;height:1px;background:#d4d4d4"></div>
<div class="a" style="left:82px;top:689px;width:3px;height:1px;background:#d4d4d4"></div>
<div class="a" style="left:79px;top:699px;width:6px;height:1px;background:#d4d4d4"></div>
<div class="a" style="left:82px;top:710px;width:3px;height:1px;background:#d4d4d4"></div>
<div class="a" style="left:79px;top:720px;width:6px;height:1px;background:#d4d4d4"></div>
<div class="a" style="left:82px;top:731px;width:3px;height:1px;background:#d4d4d4"></div>
<div class="a" style="left:66px;top:741px;width:19px;height:1px;background:#d4d4d4"></div>
<div class="t" style="left:66px;top:742.7px;font-size:12px;color:#dcdcdc;transform-origin:0 0;transform:translate(0,0) rotate(-90deg) translate(-100%,0);"><span style="display:inline-block">1500</span></div>
<div class="a" style="left:82px;top:752px;width:3px;height:1px;background:#d4d4d4"></div>
<div class="a" style="left:79px;top:762px;width:6px;height:1px;background:#d4d4d4"></div>
<div class="a" style="left:82px;top:772px;width:3px;height:1px;background:#d4d4d4"></div>
<div class="a" style="left:79px;top:783px;width:6px;height:1px;background:#d4d4d4"></div>
<div class="a" style="left:82px;top:793px;width:3px;height:1px;background:#d4d4d4"></div>
<div class="a" style="left:79px;top:804px;width:6px;height:1px;background:#d4d4d4"></div>
<div class="a" style="left:82px;top:814px;width:3px;height:1px;background:#d4d4d4"></div>
<div class="a" style="left:79px;top:825px;width:6px;height:1px;background:#d4d4d4"></div>
<div class="a" style="left:82px;top:835px;width:3px;height:1px;background:#d4d4d4"></div>
<div class="a" style="left:66px;top:846px;width:19px;height:1px;background:#d4d4d4"></div>
<div class="t" style="left:66px;top:847.0px;font-size:12px;color:#dcdcdc;transform-origin:0 0;transform:translate(0,0) rotate(-90deg) translate(-100%,0);"><span style="display:inline-block">2000</span></div>
<div class="a" style="left:82px;top:856px;width:3px;height:1px;background:#d4d4d4"></div>
<div class="a" style="left:79px;top:866px;width:6px;height:1px;background:#d4d4d4"></div>
<div class="a" style="left:82px;top:877px;width:3px;height:1px;background:#d4d4d4"></div>
<div class="a" style="left:79px;top:887px;width:6px;height:1px;background:#d4d4d4"></div>
<div class="a" style="left:82px;top:898px;width:3px;height:1px;background:#d4d4d4"></div>
<div class="a" style="left:79px;top:908px;width:6px;height:1px;background:#d4d4d4"></div>
<div class="a" style="left:82px;top:919px;width:3px;height:1px;background:#d4d4d4"></div>
<div class="a" style="left:79px;top:929px;width:6px;height:1px;background:#d4d4d4"></div>
<div class="a" style="left:82px;top:940px;width:3px;height:1px;background:#d4d4d4"></div>
<div class="a" style="left:66px;top:950px;width:19px;height:1px;background:#d4d4d4"></div>
<div class="t" style="left:66px;top:951.4px;font-size:12px;color:#dcdcdc;transform-origin:0 0;transform:translate(0,0) rotate(-90deg) translate(-100%,0);"><span style="display:inline-block">2500</span></div>
<div class="a" style="left:82px;top:960px;width:3px;height:1px;background:#d4d4d4"></div>
<div class="a" style="left:79px;top:971px;width:6px;height:1px;background:#d4d4d4"></div>
<div class="a" style="left:82px;top:981px;width:3px;height:1px;background:#d4d4d4"></div>
<div class="a" style="left:79px;top:992px;width:6px;height:1px;background:#d4d4d4"></div>
<div class="a" style="left:82px;top:1002px;width:3px;height:1px;background:#d4d4d4"></div>
<div class="a" style="left:79px;top:1013px;width:6px;height:1px;background:#d4d4d4"></div>
<div class="a" style="left:297px;top:428px;width:801px;height:451px;background:#0e0e0e"></div>
<div id="stage" class="a" style="left:298px;top:429px;width:799px;height:449px;background:#ffffff;overflow:hidden"><!--H0--><svg style="left:0;top:0" width="799" height="448" viewBox="298 429 799 448">
<defs>
<linearGradient id="tg" x1="0" y1="0" x2="1" y2="0"><stop offset="0" stop-color="#f0a262"/><stop offset="1" stop-color="#dc7434"/></linearGradient>
<pattern id="tlw" width="13" height="300" patternUnits="userSpaceOnUse" patternTransform="translate(0,0) skewX(-43)">
<rect width="13" height="300" fill="#c86428"/>
<rect x="0" width="1" height="300" fill="#7a2a04"/>
<rect x="1" width="4.5" height="300" fill="url(#tg)"/>
<rect x="7.5" width="4" height="300" fill="#8c3406"/>
<rect x="11.5" width="1" height="300" fill="#e9904a"/>
</pattern>
<pattern id="trw" width="13" height="300" patternUnits="userSpaceOnUse" patternTransform="translate(4,0) skewX(47)">
<rect width="13" height="300" fill="#c86428"/>
<rect x="0" width="1" height="300" fill="#7a2a04"/>
<rect x="1" width="4.5" height="300" fill="url(#tg)"/>
<rect x="7.5" width="4" height="300" fill="#8c3406"/>
<rect x="11.5" width="1" height="300" fill="#e9904a"/>
</pattern>
<pattern id="tl" width="12.5" height="300" patternUnits="userSpaceOnUse" patternTransform="translate(2,0) skewX(-31.5)">
<rect width="12.5" height="300" fill="#c86428"/>
<rect x="0" width="1" height="300" fill="#7a2a04"/>
<rect x="1" width="4.5" height="300" fill="url(#tg)"/>
<rect x="7.5" width="4" height="300" fill="#8c3406"/>
<rect x="11.5" width="1" height="300" fill="#e9904a"/>
</pattern>
<pattern id="tr" width="12.5" height="300" patternUnits="userSpaceOnUse" patternTransform="translate(6,0) skewX(31.5)">
<rect width="12.5" height="300" fill="#c86428"/>
<rect x="0" width="1" height="300" fill="#7a2a04"/>
<rect x="1" width="4.5" height="300" fill="url(#tg)"/>
<rect x="7.5" width="4" height="300" fill="#8c3406"/>
<rect x="11.5" width="1" height="300" fill="#e9904a"/>
</pattern>
<pattern id="tv" width="8" height="300" patternUnits="userSpaceOnUse">
<rect width="8" height="300" fill="#cf6a2a"/><rect x="0" width="3" height="300" fill="#f0a060"/><rect x="5" width="2.5" height="300" fill="#923606"/></pattern>
<pattern id="hr" width="300" height="15.5" patternUnits="userSpaceOnUse" patternTransform="translate(0,541)">
<rect y="0" width="300" height="1" fill="#f5b070" opacity="0.55"/></pattern>
<pattern id="ridge" width="11" height="10" patternUnits="userSpaceOnUse" patternTransform="translate(2,0)">
<rect width="11" height="10" fill="#e68a46"/>
<path d="M10.5 0 C8.5 3, 8.5 6, 10.5 9" stroke="#a84a14" stroke-width="0.9" fill="none"/></pattern>
<pattern id="scal" width="5" height="4" patternUnits="userSpaceOnUse">
<path d="M0 0 Q2.5 4 5 0 Z" fill="#7a2206"/></pattern>
<linearGradient id="rg" x1="0" y1="0" x2="0" y2="1"><stop offset="0" stop-color="#f7b070" stop-opacity="0.8"/><stop offset="0.55" stop-color="#e07a38" stop-opacity="0"/><stop offset="1" stop-color="#9a4010" stop-opacity="0.9"/></linearGradient>
<linearGradient id="bam" x1="0" y1="0" x2="1" y2="0"><stop offset="0" stop-color="#9a7a48"/><stop offset="0.45" stop-color="#d8b884"/><stop offset="1" stop-color="#a08050"/></linearGradient>
<linearGradient id="plf" x1="0" y1="0" x2="0" y2="1"><stop offset="0" stop-color="#7a6d66"/><stop offset="1" stop-color="#5e524c"/></linearGradient>
</defs>
<path d="M366 719 L490 719 L490 733 L322 733 Z" fill="#bdb8b4"/>
<rect x="322" y="733" width="175" height="11" fill="url(#plf)"/>
<path d="M884 719 L1052 720 L1085 734 L884 734 Z" fill="#bdb8b4"/>
<rect x="890" y="734" width="195" height="10" fill="url(#plf)"/>
<path d="M490 732 L884 732 L929.5 749 L440 749 Z" fill="#c0bbb7"/>
<rect x="440" y="749" width="489.5" height="11" fill="url(#plf)"/>
<path d="M637 752 L727 752 L737 760 L624 760 Z" fill="#bfbab6"/>
<rect x="624" y="760" width="113" height="7.5" fill="url(#plf)"/>
<rect x="366" y="620" width="124" height="103" fill="#4d679f"/>
<rect x="366" y="711" width="124" height="12" fill="#425786"/>
<rect x="884" y="620" width="168" height="101" fill="#4d679f"/>
<rect x="884" y="710" width="168" height="11" fill="#425786"/>
<rect x="490" y="622" width="394" height="111" fill="#5972aa"/>
<rect x="490" y="721" width="394" height="12" fill="#45598c"/>
<rect x="489.5" y="622" width="1" height="111" fill="#3e5488"/>
<rect x="883.5" y="622" width="1" height="111" fill="#3e5488"/>
<rect x="400" y="633" width="7" height="2" fill="#3e5894"/><rect x="404" y="637" width="6" height="2" fill="#3e5894"/>
<rect x="404" y="636" width="7" height="2" fill="#3e5894"/><rect x="408" y="640" width="6" height="2" fill="#3e5894"/>
<rect x="452" y="675" width="7" height="2" fill="#3e5894"/><rect x="456" y="679" width="6" height="2" fill="#3e5894"/>
<rect x="462" y="672" width="7" height="2" fill="#3e5894"/><rect x="466" y="676" width="6" height="2" fill="#3e5894"/>
<rect x="402" y="700" width="7" height="2" fill="#3e5894"/><rect x="406" y="704" width="6" height="2" fill="#3e5894"/>
<rect x="410" y="697" width="7" height="2" fill="#3e5894"/><rect x="414" y="701" width="6" height="2" fill="#3e5894"/>
<rect x="612" y="700" width="7" height="2" fill="#3e5894"/><rect x="616" y="704" width="6" height="2" fill="#3e5894"/>
<rect x="620" y="697" width="7" height="2" fill="#3e5894"/><rect x="624" y="701" width="6" height="2" fill="#3e5894"/>
<rect x="740" y="712" width="7" height="2" fill="#3e5894"/><rect x="744" y="716" width="6" height="2" fill="#3e5894"/>
<rect x="790" y="715" width="7" height="2" fill="#3e5894"/><rect x="794" y="719" width="6" height="2" fill="#3e5894"/>
<rect x="800" y="712" width="7" height="2" fill="#3e5894"/><rect x="804" y="716" width="6" height="2" fill="#3e5894"/>
<rect x="835" y="623" width="7" height="2" fill="#3e5894"/><rect x="839" y="627" width="6" height="2" fill="#3e5894"/>
<rect x="1000" y="651" width="7" height="2" fill="#3e5894"/><rect x="1004" y="655" width="6" height="2" fill="#3e5894"/>
<rect x="1008" y="655" width="7" height="2" fill="#3e5894"/><rect x="1012" y="659" width="6" height="2" fill="#3e5894"/>
<rect x="917" y="693" width="7" height="2" fill="#3e5894"/><rect x="921" y="697" width="6" height="2" fill="#3e5894"/>
<rect x="925" y="697" width="7" height="2" fill="#3e5894"/><rect x="929" y="701" width="6" height="2" fill="#3e5894"/>
<rect x="1043" y="693" width="7" height="2" fill="#3e5894"/><rect x="1047" y="697" width="6" height="2" fill="#3e5894"/>
<rect x="1040" y="697" width="7" height="2" fill="#3e5894"/><rect x="1044" y="701" width="6" height="2" fill="#3e5894"/>
<rect x="419.5" y="641" width="41.5" height="51" fill="#425a92"/><rect x="421.5" y="643" width="37.5" height="47" fill="#3e2a22"/><rect x="423.5" y="645" width="33.5" height="43" fill="#6a5040"/><rect x="425.0" y="646.5" width="30.5" height="40" fill="#4a342a"/><rect x="426.5" y="648" width="27.5" height="37" fill="#8e4e4a"/><rect x="426.5" y="648" width="8.2" height="37" fill="#4e3a30"/><rect x="428.0" y="651" width="5.0" height="31" fill="none" stroke="#7a6656" stroke-width="1"/><rect x="436.1" y="648" width="1.4" height="37" fill="#a89050"/><rect x="443.0" y="648" width="1.4" height="37" fill="#a89050"/><rect x="449.9" y="648" width="1.4" height="37" fill="#a89050"/>
<rect x="554.5" y="642" width="48.5" height="58.5" fill="#425a92"/><rect x="556.5" y="644" width="44.5" height="54.5" fill="#3e2a22"/><rect x="558.5" y="646" width="40.5" height="50.5" fill="#6a5040"/><rect x="560.0" y="647.5" width="37.5" height="47.5" fill="#4a342a"/><rect x="561.5" y="649" width="34.5" height="44.5" fill="#8e4e4a"/><rect x="561.5" y="649" width="10.3" height="44.5" fill="#4e3a30"/><rect x="563.0" y="652" width="6.2" height="38.5" fill="none" stroke="#7a6656" stroke-width="1"/><rect x="573.6" y="649" width="1.4" height="44.5" fill="#a89050"/><rect x="582.2" y="649" width="1.4" height="44.5" fill="#a89050"/><rect x="590.8" y="649" width="1.4" height="44.5" fill="#a89050"/>
<rect x="773.5" y="642.5" width="49.0" height="56.5" fill="#425a92"/><rect x="775.5" y="644.5" width="45.0" height="52.5" fill="#3e2a22"/><rect x="777.5" y="646.5" width="41.0" height="48.5" fill="#6a5040"/><rect x="779.0" y="648.0" width="38.0" height="45.5" fill="#4a342a"/><rect x="780.5" y="649.5" width="35.0" height="42.5" fill="#8e4e4a"/><rect x="805.0" y="649.5" width="10.5" height="42.5" fill="#4e3a30"/><rect x="807.7" y="652.5" width="6.3" height="36.5" fill="none" stroke="#7a6656" stroke-width="1"/><rect x="785.8" y="649.5" width="1.4" height="42.5" fill="#a89050"/><rect x="794.5" y="649.5" width="1.4" height="42.5" fill="#a89050"/><rect x="803.2" y="649.5" width="1.4" height="42.5" fill="#a89050"/>
<rect x="939.5" y="643" width="46.5" height="56.5" fill="#425a92"/><rect x="941.5" y="645" width="42.5" height="52.5" fill="#3e2a22"/><rect x="943.5" y="647" width="38.5" height="48.5" fill="#6a5040"/><rect x="945.0" y="648.5" width="35.5" height="45.5" fill="#4a342a"/><rect x="946.5" y="650" width="32.5" height="42.5" fill="#8e4e4a"/><rect x="946.5" y="650" width="9.8" height="42.5" fill="#4e3a30"/><rect x="948.0" y="653" width="5.8" height="36.5" fill="none" stroke="#7a6656" stroke-width="1"/><rect x="957.9" y="650" width="1.4" height="42.5" fill="#a89050"/><rect x="966.0" y="650" width="1.4" height="42.5" fill="#a89050"/><rect x="974.1" y="650" width="1.4" height="42.5" fill="#a89050"/>
<rect x="649.5" y="641" width="65" height="92" fill="#475f94"/>
<rect x="652.5" y="643" width="62" height="90" fill="#3a2818"/>
<rect x="653.5" y="644" width="60" height="3" fill="#6a4a3a"/>
<rect x="653.5" y="644" width="2.5" height="88" fill="#6a4a3a"/><rect x="656.5" y="646" width="1.5" height="86" fill="#5a4030"/>
<rect x="660.5" y="649" width="23.5" height="83" fill="#4e3a2e"/>
<rect x="664.0" y="655" width="15.5" height="42" fill="#6a5444"/><rect x="666.5" y="658" width="10.5" height="36" fill="#42302a"/>
<rect x="664.0" y="700.5" width="15.5" height="28.5" fill="#6a5444"/><rect x="666.5" y="703" width="10.5" height="23.5" fill="#42302a"/>
<rect x="686" y="649" width="23.5" height="83" fill="#4e3a2e"/>
<rect x="689.5" y="655" width="15.5" height="42" fill="#6a5444"/><rect x="692" y="658" width="10.5" height="36" fill="#42302a"/>
<rect x="689.5" y="700.5" width="15.5" height="28.5" fill="#6a5444"/><rect x="692" y="703" width="10.5" height="23.5" fill="#42302a"/>
<rect x="684" y="649" width="2" height="83" fill="#6a5444"/>
<rect x="679" y="698" width="12" height="3" fill="#2a1e16"/>
<path d="M396 545 L507 545 L460 626 L322 626 Z" fill="url(#tlw)"/><path d="M396 545 L507 545 L460 626 L322 626 Z" fill="url(#hr)"/>
<path d="M882 547 L1000 547 L1085 627 L938 627 Z" fill="url(#trw)"/><path d="M882 547 L1000 547 L1085 627 L938 627 Z" fill="url(#hr)"/>
<path d="M505 536 L729 536 L673 628 L450 628 Z" fill="url(#tl)"/>
<path d="M729 536 L882 536 L940 628 L716 628 L695 594 Z" fill="url(#tr)"/>
<path d="M695 594 L716 628 L673 628 Z" fill="url(#tv)"/>
<path d="M505 536 L882 536 L940 628 L450 628 Z" fill="url(#hr)"/>
<path d="M721 536 L733 536 L677 628 L665 628 Z" fill="#f3a868" opacity="0.45"/>
<path d="M729.5 536 L673.5 628" stroke="#7a2a04" stroke-width="1.3"/>
<path d="M695 594 L716 628" stroke="#7a2a04" stroke-width="1"/>
<path d="M882 547 L938 627" stroke="#8a3206" stroke-width="1.2"/>
<path d="M507 545 L460 626" stroke="#8a3206" stroke-width="1" opacity="0.6"/>
<rect x="322" y="624.5" width="138" height="3" fill="url(#scal)"/>
<rect x="450" y="626.5" width="490" height="3" fill="url(#scal)"/>
<rect x="938" y="625.5" width="147" height="3" fill="url(#scal)"/>
<path d="M322 626 L460 626 M450 628 L940 628 M938 627 L1085 627" stroke="#8a2a08" stroke-width="1"/>
<path d="M322 625.5 L396 544.5" stroke="#a84210" stroke-width="1"/>
<path d="M1000 546.5 L1085 626.5" stroke="#a84210" stroke-width="1"/>
<rect x="396" y="538" width="111" height="7.5" rx="3" fill="url(#ridge)"/><rect x="396" y="538" width="111" height="7.5" rx="3" fill="url(#rg)"/>
<rect x="882" y="540" width="118" height="7.5" rx="3" fill="url(#ridge)"/><rect x="882" y="540" width="118" height="7.5" rx="3" fill="url(#rg)"/>
<rect x="505" y="529" width="377" height="7.5" rx="3" fill="url(#ridge)"/><rect x="505" y="529" width="377" height="7.5" rx="3" fill="url(#rg)"/>
<rect x="474" y="560" width="20" height="3" fill="#a08a58"/><rect x="486.0" y="560" width="1" height="3" fill="#6a5a30"/>
<rect x="441" y="604" width="25" height="3" fill="#a08a58"/><rect x="456.0" y="604" width="1" height="3" fill="#6a5a30"/>
<rect x="898" y="563" width="22" height="3" fill="#a08a58"/><rect x="911.2" y="563" width="1" height="3" fill="#6a5a30"/>
<rect x="926" y="607" width="27" height="3" fill="#a08a58"/><rect x="942.2" y="607" width="1" height="3" fill="#6a5a30"/>
<rect x="349" y="626" width="6.5" height="100" fill="url(#bam)"/><rect x="348.5" y="640" width="7.5" height="1.3" fill="#8a6428"/><rect x="348.5" y="657" width="7.5" height="1.3" fill="#8a6428"/><rect x="348.5" y="674" width="7.5" height="1.3" fill="#8a6428"/><rect x="348.5" y="691" width="7.5" height="1.3" fill="#8a6428"/><rect x="348.5" y="708" width="7.5" height="1.3" fill="#8a6428"/>
<rect x="505.5" y="628" width="6.5" height="118" fill="url(#bam)"/><rect x="505.0" y="642" width="7.5" height="1.3" fill="#8a6428"/><rect x="505.0" y="659" width="7.5" height="1.3" fill="#8a6428"/><rect x="505.0" y="676" width="7.5" height="1.3" fill="#8a6428"/><rect x="505.0" y="693" width="7.5" height="1.3" fill="#8a6428"/><rect x="505.0" y="710" width="7.5" height="1.3" fill="#8a6428"/><rect x="505.0" y="727" width="7.5" height="1.3" fill="#8a6428"/>
<rect x="863" y="628" width="6.5" height="117.5" fill="url(#bam)"/><rect x="862.5" y="642" width="7.5" height="1.3" fill="#8a6428"/><rect x="862.5" y="659" width="7.5" height="1.3" fill="#8a6428"/><rect x="862.5" y="676" width="7.5" height="1.3" fill="#8a6428"/><rect x="862.5" y="693" width="7.5" height="1.3" fill="#8a6428"/><rect x="862.5" y="710" width="7.5" height="1.3" fill="#8a6428"/><rect x="862.5" y="727" width="7.5" height="1.3" fill="#8a6428"/>
<rect x="1051" y="627" width="6.5" height="102.5" fill="url(#bam)"/><rect x="1050.5" y="641" width="7.5" height="1.3" fill="#8a6428"/><rect x="1050.5" y="658" width="7.5" height="1.3" fill="#8a6428"/><rect x="1050.5" y="675" width="7.5" height="1.3" fill="#8a6428"/><rect x="1050.5" y="692" width="7.5" height="1.3" fill="#8a6428"/><rect x="1050.5" y="709" width="7.5" height="1.3" fill="#8a6428"/>
</svg><!--H1--></div>
<div class="a" style="left:1302px;top:505px;width:6px;height:414px;border-radius:3px;background:#6e6e6e"></div>
<div class="a" style="left:113px;top:1007px;width:1160px;height:5px;border-radius:3px;background:#6e6e6e"></div>
<!-- FRAME PICKER -->
<div class="a" style="left:1317px;top:50px;width:168px;height:14px;background:#2e2e2e"></div>
<div class="a" style="left:1317px;top:65px;width:168px;height:955px;background:#323232"></div>

<!-- ICON COLUMN -->
<div class="a" style="left:1488px;top:50px;width:48px;height:14px;background:#2e2e2e"></div>
<div class="a" style="left:1488px;top:65px;width:48px;height:955px;background:#323232"></div>

<!-- PROPERTIES -->
<div class="a" style="left:1538px;top:50px;width:382px;height:14px;background:#2e2e2e"></div>
<div class="a" style="left:1538px;top:65px;width:382px;height:955px;background:#323232"></div>

<svg style="left:1470px;top:54px" width="8" height="6" viewBox="0 0 8 6"><path d="M3.5 0.5 L1 3 L3.5 5.5 M7.5 0.5 L5 3 L7.5 5.5" stroke="#e0e0e0" stroke-width="1.2" fill="none"/></svg>
<svg style="left:1520px;top:54px" width="8" height="6" viewBox="0 0 8 6"><path d="M3.5 0.5 L1 3 L3.5 5.5 M7.5 0.5 L5 3 L7.5 5.5" stroke="#e0e0e0" stroke-width="1.2" fill="none"/></svg>
<svg style="left:1904px;top:54px" width="8" height="6" viewBox="0 0 8 6"><path d="M0.5 0.5 L3 3 L0.5 5.5 M4.5 0.5 L7 3 L4.5 5.5" stroke="#e0e0e0" stroke-width="1.2" fill="none"/></svg>
<svg style="left:1390px;top:69px" width="24" height="6" viewBox="0 0 24 6"><rect x="0.0" y="0" width="1" height="5" fill="#5a5a5a"/><rect x="3.2" y="0" width="1" height="5" fill="#5a5a5a"/><rect x="6.4" y="0" width="1" height="5" fill="#5a5a5a"/><rect x="9.6" y="0" width="1" height="5" fill="#5a5a5a"/><rect x="12.8" y="0" width="1" height="5" fill="#5a5a5a"/><rect x="16.0" y="0" width="1" height="5" fill="#5a5a5a"/><rect x="19.2" y="0" width="1" height="5" fill="#5a5a5a"/><rect x="22.4" y="0" width="1" height="5" fill="#5a5a5a"/></svg>
<div class="a" style="left:1317px;top:116px;width:168px;height:2px;background:#262626"></div>
<svg style="left:1328px;top:81px" width="26" height="26" viewBox="0 0 26 26"><rect x="0.5" y="0.5" width="6" height="9" rx="1" fill="#c6c6c6"/><rect x="9.5" y="0.5" width="6" height="9" rx="1" fill="#c6c6c6"/><rect x="18.5" y="0.5" width="6" height="9" rx="1" fill="#c6c6c6"/><circle cx="3.5" cy="6.5" r="1.3" fill="#323232"/><circle cx="12.5" cy="6.5" r="1.3" fill="#323232"/><circle cx="21.5" cy="6.5" r="1.3" fill="#323232"/><rect x="1" y="14.5" width="23.5" height="10" fill="none" stroke="#c6c6c6" stroke-width="1.4"/><rect x="3" y="17" width="5" height="5.5" fill="#c6c6c6"/><path d="M5 19 L12 8.5" stroke="#c6c6c6" stroke-width="1.2"/><rect x="10" y="16.5" width="14" height="7" fill="#c6c6c6"/><path d="M10.5 17.2 H24 M10.5 22.8 H24" stroke="#323232" stroke-width="0.8" stroke-dasharray="1.2 1.2"/></svg>
<div class="t" style="left:1365px;top:89.0px;font-size:12px;font-weight:700;color:#f2f2f2;">Frame Picker</div>
<div class="a" style="left:1488px;top:150px;width:48px;height:2px;background:#262626"></div>
<div class="a" style="left:1488px;top:271px;width:48px;height:2px;background:#262626"></div>
<div class="a" style="left:1488px;top:357px;width:48px;height:2px;background:#262626"></div>
<div class="a" style="left:1488px;top:409px;width:48px;height:611px;background:#323232"></div>
<div class="a" style="left:1488px;top:408px;width:48px;height:2px;background:#262626"></div>
<svg style="left:1500px;top:69px" width="24" height="6" viewBox="0 0 24 6"><rect x="0.0" y="0" width="1" height="5" fill="#5a5a5a"/><rect x="3.2" y="0" width="1" height="5" fill="#5a5a5a"/><rect x="6.4" y="0" width="1" height="5" fill="#5a5a5a"/><rect x="9.6" y="0" width="1" height="5" fill="#5a5a5a"/><rect x="12.8" y="0" width="1" height="5" fill="#5a5a5a"/><rect x="16.0" y="0" width="1" height="5" fill="#5a5a5a"/><rect x="19.2" y="0" width="1" height="5" fill="#5a5a5a"/><rect x="22.4" y="0" width="1" height="5" fill="#5a5a5a"/></svg>
<svg style="left:1500px;top:155px" width="24" height="6" viewBox="0 0 24 6"><rect x="0.0" y="0" width="1" height="5" fill="#5a5a5a"/><rect x="3.2" y="0" width="1" height="5" fill="#5a5a5a"/><rect x="6.4" y="0" width="1" height="5" fill="#5a5a5a"/><rect x="9.6" y="0" width="1" height="5" fill="#5a5a5a"/><rect x="12.8" y="0" width="1" height="5" fill="#5a5a5a"/><rect x="16.0" y="0" width="1" height="5" fill="#5a5a5a"/><rect x="19.2" y="0" width="1" height="5" fill="#5a5a5a"/><rect x="22.4" y="0" width="1" height="5" fill="#5a5a5a"/></svg>
<svg style="left:1500px;top:276px" width="24" height="6" viewBox="0 0 24 6"><rect x="0.0" y="0" width="1" height="5" fill="#5a5a5a"/><rect x="3.2" y="0" width="1" height="5" fill="#5a5a5a"/><rect x="6.4" y="0" width="1" height="5" fill="#5a5a5a"/><rect x="9.6" y="0" width="1" height="5" fill="#5a5a5a"/><rect x="12.8" y="0" width="1" height="5" fill="#5a5a5a"/><rect x="16.0" y="0" width="1" height="5" fill="#5a5a5a"/><rect x="19.2" y="0" width="1" height="5" fill="#5a5a5a"/><rect x="22.4" y="0" width="1" height="5" fill="#5a5a5a"/></svg>
<svg style="left:1500px;top:362px" width="24" height="6" viewBox="0 0 24 6"><rect x="0.0" y="0" width="1" height="5" fill="#5a5a5a"/><rect x="3.2" y="0" width="1" height="5" fill="#5a5a5a"/><rect x="6.4" y="0" width="1" height="5" fill="#5a5a5a"/><rect x="9.6" y="0" width="1" height="5" fill="#5a5a5a"/><rect x="12.8" y="0" width="1" height="5" fill="#5a5a5a"/><rect x="16.0" y="0" width="1" height="5" fill="#5a5a5a"/><rect x="19.2" y="0" width="1" height="5" fill="#5a5a5a"/><rect x="22.4" y="0" width="1" height="5" fill="#5a5a5a"/></svg>
<svg style="left:1498px;top:83px" width="25" height="20" viewBox="0 0 25 20"><path d="M12 1 C19 0.5, 24.5 4, 24.5 9 C24.5 14, 20 18.5, 12 18.5 C5 18.5, 0.5 15.5, 0.5 12 C0.5 9.5, 3 9, 5 8.5 C7 8, 5.5 5.5, 6 4 C7 1.5, 9.5 1, 12 1Z" fill="#c6c6c6"/><circle cx="5" cy="13" r="1.8" fill="#323232"/><circle cx="9.5" cy="15" r="1.8" fill="#323232"/><circle cx="14.5" cy="14.5" r="1.6" fill="#323232"/><circle cx="19" cy="12" r="1.5" fill="#323232"/><circle cx="20.5" cy="7.5" r="1.4" fill="#323232"/><circle cx="18" cy="4.5" r="1.2" fill="#323232"/></svg>
<svg style="left:1499px;top:121px" width="22" height="16" viewBox="0 0 22 16"><rect x="0" y="0" width="21" height="15" fill="#c6c6c6"/><rect x="1.5" y="1.5" width="5" height="5" fill="#7a7a7a"/><rect x="14.5" y="1.5" width="5" height="5" fill="#7a7a7a"/><rect x="1.5" y="8.5" width="5" height="5" fill="#7a7a7a"/><rect x="8" y="8.5" width="5" height="5" fill="#9a9a9a"/><rect x="14.5" y="8.5" width="5" height="5" fill="#9a9a9a"/></svg>
<svg style="left:1501px;top:167px" width="20" height="25" viewBox="0 0 20 25"><rect x="0" y="0" width="1.3" height="24" fill="#c6c6c6"/><rect x="3" y="3.5" width="10" height="7" fill="#c6c6c6"/><rect x="3" y="13" width="16.5" height="7" fill="#c6c6c6"/></svg>
<svg style="left:1501px;top:204px" width="21" height="21" viewBox="0 0 21 21"><circle cx="10.3" cy="10.3" r="10" fill="#c6c6c6"/><circle cx="10.5" cy="5.5" r="1.7" fill="#323232"/><path d="M8 8.5 H11.8 V14.5 H13.3 V16 H8 V14.5 H9.5 V10 H8 Z" fill="#323232"/></svg>
<svg style="left:1501px;top:239px" width="21" height="21" viewBox="0 0 21 21"><rect x="2.5" y="2.5" width="15" height="15" fill="none" stroke="#c6c6c6" stroke-width="1.4" stroke-dasharray="2 2.3"/><rect x="0" y="0" width="4.5" height="4.5" fill="#c6c6c6"/><rect x="15.5" y="0" width="4.5" height="4.5" fill="#c6c6c6"/><rect x="0" y="15.5" width="4.5" height="4.5" fill="#c6c6c6"/><rect x="15.5" y="15.5" width="4.5" height="4.5" fill="#c6c6c6"/><rect x="8" y="0" width="4" height="4" fill="#c6c6c6"/><rect x="8" y="16" width="4" height="4" fill="#c6c6c6"/><rect x="0" y="8" width="4" height="4" fill="#c6c6c6"/><rect x="16" y="8" width="4" height="4" fill="#c6c6c6"/><path d="M10 9 V11 M9 10 H11" stroke="#c6c6c6" stroke-width="0.8"/></svg>
<svg style="left:1498px;top:290px" width="26" height="21" viewBox="0 0 26 21"><rect x="0.5" y="2" width="5" height="18.5" fill="#c6c6c6"/><rect x="7" y="0.5" width="6.5" height="20" fill="#c6c6c6"/><path d="M15 4 L19.5 2 L25.5 18 L21 20 Z" fill="#c6c6c6"/><rect x="2" y="11" width="2" height="7" fill="#323232"/><path d="M8.5 4 H12 M8.5 6 H12" stroke="#323232" stroke-width="0.8"/></svg>
<svg style="left:1498px;top:323px" width="24" height="25" viewBox="0 0 24 25"><circle cx="5.5" cy="19" r="5" fill="#c6c6c6"/><circle cx="14" cy="12" r="3.8" fill="#c6c6c6"/><circle cx="19.5" cy="3.2" r="2.7" fill="#c6c6c6"/></svg>
<svg style="left:1499px;top:375px" width="22" height="22" viewBox="0 0 22 22"><rect x="0.7" y="0.7" width="16" height="16" fill="none" stroke="#c6c6c6" stroke-width="1.4"/><rect x="4.5" y="4.5" width="16.5" height="16.5" fill="#323232" stroke="#c6c6c6" stroke-width="1.4"/><path d="M12 4.5 V11.5 L14 10 L16 11.5 V4.5 Z" fill="#c6c6c6"/></svg>
<div class="a" style="left:1617px;top:65px;width:303px;height:21px;background:#2c2c2c"></div>
<div class="a" style="left:1617px;top:65px;width:56px;height:21px;background:#2e2e2e;border-left:1px solid #262626;border-right:1px solid #262626"></div>
<div class="t ty" style="left:1547.5px;top:68.7px;font-size:12px;font-weight:700;color:#f2f2f2;">Properties</div>
<div class="t ty" style="left:1626px;top:68.7px;font-size:12px;font-weight:700;color:#8a8a8a;">Assets</div>
<svg style="left:1903px;top:71px" width="10" height="8" viewBox="0 0 10 8"><rect x="0" y="0" width="10" height="1" fill="#d0d0d0"/><rect x="0" y="2" width="10" height="1" fill="#d0d0d0"/><rect x="0" y="4" width="10" height="1" fill="#d0d0d0"/><rect x="0" y="6" width="10" height="1" fill="#d0d0d0"/></svg>
<div class="a" style="left:1819px;top:100px;width:90px;height:39px;background:#4a4a4a;border-radius:5px"></div>
<div class="t ty" style="left:1575px;top:114.4px;font-size:15.5px;font-weight:400;color:#8e8e8e;">Tool</div>
<div class="t ty" style="left:1659.4px;top:114.6px;font-size:15.2px;font-weight:400;color:#8e8e8e;">Object</div>
<div class="t ty" style="left:1750px;top:114.8px;font-size:15px;font-weight:400;color:#8e8e8e;">Frame</div>
<div class="t ty" style="left:1850px;top:114.8px;font-size:15px;font-weight:400;color:#f2f2f2;">Doc</div>
<div class="a" style="left:1538px;top:147px;width:382px;height:2px;background:#262626"></div>
<div class="a" style="left:1538px;top:246px;width:382px;height:2px;background:#262626"></div>
<div class="a" style="left:1538px;top:308px;width:382px;height:2px;background:#262626"></div>
<div class="a" style="left:1538px;top:491px;width:382px;height:2px;background:#262626"></div>
<div class="a" style="left:1538px;top:823px;width:382px;height:2px;background:#262626"></div>
<div class="a" style="left:1538px;top:876px;width:382px;height:2px;background:#262626"></div>
<div class="a" style="left:1538px;top:928px;width:382px;height:2px;background:#262626"></div>
<svg style="left:1573px;top:170px" width="22" height="21" viewBox="0 0 22 21"><rect x="0.7" y="0.7" width="20.3" height="19" fill="none" stroke="#bdbdbd" stroke-width="1.3"/></svg>
<div class="t ty" style="left:1575px;top:175.4px;font-size:12.5px;font-weight:400;color:#c8c8c8;">An</div>
<div class="t ty" style="left:1629px;top:174.3px;font-size:15px;font-weight:400;color:#bdbdbd;">house 3.fla</div>
<div class="t ty" style="left:1629px;top:218.1px;font-size:15.5px;font-weight:400;color:#9a9a9a;">Document</div>
<div class="a" style="left:1563px;top:258px;width:45px;height:40px;background:#555555;border:1px solid #555555;border-radius:5px"></div>
<div class="a" style="left:1623px;top:258px;width:40px;height:40px;background:#555555;border:1px solid #555555;border-radius:5px"></div>
<div class="a" style="left:1678px;top:258px;width:40px;height:40px;background:#555555;border:1px solid #555555;border-radius:5px"></div>
<div class="a" style="left:1733px;top:258px;width:40px;height:40px;background:#2b2b2b;border:1px solid #444444;border-radius:5px"></div>
<svg style="left:1577px;top:269px" width="18" height="19" viewBox="0 0 18 19"><path d="M2.5 18 V8.5 C2.5 0.5, 15.5 0.5, 15.5 8.5 V18" stroke="#f8f8f8" stroke-width="4" fill="none"/><rect x="0.5" y="14.5" width="4" height="4" fill="#9a9a9a"/><rect x="13.5" y="14.5" width="4" height="4" fill="#9a9a9a"/></svg>
<svg style="left:1633px;top:268px" width="22" height="21" viewBox="0 0 22 21"><path d="M5 0.5 V20" stroke="#e8e8e8" stroke-width="1.4"/><path d="M0.5 5 H21" stroke="#e8e8e8" stroke-width="1.4"/><path d="M9.5 2 L5 5 L9.5 8" stroke="#e8e8e8" stroke-width="1.2" fill="none"/><path d="M10 11.5 H15 C18 11.5, 18 18, 15 18 H10" stroke="#e8e8e8" stroke-width="2" fill="none" stroke-dasharray="2.5 1.5"/></svg>
<svg style="left:1688px;top:268px" width="22" height="22" viewBox="0 0 22 22"><path d="M0.5 0.5 H21 V5 H5 V21 H0.5 Z" fill="#e8e8e8"/><path d="M7 2.7 H20 M2.7 7 V20" stroke="#555" stroke-width="1" stroke-dasharray="1.5 1.5"/></svg>
<svg style="left:1744px;top:268px" width="18" height="21" viewBox="0 0 18 21"><path d="M4.5 9 V6.5 C4.5 1.5, 13.5 1.5, 13.5 6.5 V9" stroke="#c8c8c8" stroke-width="2.4" fill="none"/><rect x="1.5" y="8.5" width="15" height="12" rx="1" fill="#c8c8c8"/><circle cx="9" cy="13" r="1.6" fill="#2b2b2b"/><rect x="8.2" y="13" width="1.6" height="4" fill="#2b2b2b"/></svg>
<svg style="left:1563px;top:332px" width="13" height="9" viewBox="0 0 13 9"><path d="M1 1.5 L6.5 7 L12 1.5" stroke="#c8c8c8" stroke-width="2" fill="none"/></svg>
<div class="t ty" style="left:1589.5px;top:330.0px;font-size:15.3px;font-weight:700;color:#d6d6d6;">Publish Settings</div>
<div class="t ty" style="left:1564px;top:384.4px;font-size:14px;font-weight:400;color:#8e8e8e;">Profile</div>
<div class="a" style="left:1618px;top:371px;width:275px;height:40px;background:#2a2a2a;border:1px solid #474747;border-radius:5px"></div>
<div class="t ty" style="left:1634.5px;top:384.9px;font-size:15.5px;font-weight:400;color:#e4e4e4;">Default</div>
<svg style="left:1864px;top:386px" width="14" height="10" viewBox="0 0 14 10"><path d="M1.5 1.5 L7 7.5 L12.5 1.5" stroke="#e0e0e0" stroke-width="2.2" fill="none"/></svg>
<div class="a" style="left:1563px;top:431px;width:330px;height:40px;background:#2a2a2a;border:1px solid #474747;border-radius:5px"></div>
<div class="t ty" style="left:1680.5px;top:444.9px;font-size:15.5px;font-weight:400;color:#e4e4e4;">More settings</div>
<svg style="left:1563px;top:515px" width="13" height="9" viewBox="0 0 13 9"><path d="M1 1.5 L6.5 7 L12 1.5" stroke="#c8c8c8" stroke-width="2" fill="none"/></svg>
<div class="t ty" style="left:1589.5px;top:513.3px;font-size:15.3px;font-weight:700;color:#d6d6d6;">Document Settings</div>
<div class="t ty" style="left:1564px;top:568.1px;font-size:13.5px;font-weight:400;color:#8e8e8e;">W</div>
<div class="t ty" style="left:1593px;top:566.4px;font-size:15.5px;font-weight:400;color:#e4e4e4;">3840</div>
<div class="a" style="left:1593px;top:592px;width:54px;height:1px;background:#4a4a4a"></div>
<div class="t ty" style="left:1564px;top:628.1px;font-size:13.5px;font-weight:400;color:#8e8e8e;">H</div>
<div class="t ty" style="left:1589.5px;top:626.4px;font-size:15.5px;font-weight:400;color:#e4e4e4;">2160</div>
<div class="a" style="left:1590px;top:652px;width:53px;height:1px;background:#4a4a4a"></div>
<svg style="left:1647px;top:574px" width="24" height="60" viewBox="0 0 24 60"><path d="M1 1.5 H14.5 V17 M1 58 H14.5 V43" stroke="#707070" stroke-width="1.3" fill="none"/><path d="M11 28 V25.5 C11 21.5, 18.5 21.5, 18.5 25.5" stroke="#8a8a8a" stroke-width="1.6" fill="none"/><rect x="8.5" y="28" width="12" height="9.5" rx="1" fill="#8a8a8a"/><rect x="13.8" y="31" width="1.4" height="3.5" fill="#323232"/></svg>
<div class="t ty" style="left:1564px;top:673.7px;font-size:12.8px;font-weight:400;color:#8e8e8e;">Stage</div>
<div class="a" style="left:1626px;top:664px;width:60px;height:29px;background:#ffffff;border-radius:4px"></div>
<div class="t ty" style="left:1564px;top:719.8px;font-size:11.5px;font-weight:400;color:#8e8e8e;">FPS</div>
<div class="t ty" style="left:1625.5px;top:716.4px;font-size:15.5px;font-weight:400;color:#e4e4e4;">30</div>
<div class="a" style="left:1626px;top:742px;width:54px;height:1px;background:#4a4a4a"></div>
<div class="a" style="left:1711px;top:556px;width:182px;height:40px;background:#2a2a2a;border:1px solid #474747;border-radius:5px"></div>
<div class="t ty" style="left:1746px;top:570.6px;font-size:15.5px;font-weight:400;color:#e4e4e4;">Match contents</div>
<div class="a" style="left:1711px;top:627px;width:18px;height:18px;border:2px solid #8c8c8c;border-radius:3px"></div>
<div class="t ty" style="left:1742px;top:631.0px;font-size:14.8px;font-weight:400;color:#e4e4e4;">Scale Content</div>
<div class="a" style="left:1711px;top:672px;width:18px;height:18px;border:2px solid #8c8c8c;border-radius:3px"></div>
<div class="t ty" style="left:1742px;top:675.4px;font-size:15.5px;font-weight:400;color:#e4e4e4;">Apply to pasteboard</div>
<div class="a" style="left:1711px;top:717px;width:18px;height:18px;border:2px solid #8c8c8c;border-radius:3px"></div>
<div class="t ty" style="left:1742px;top:721.6px;font-size:14px;font-weight:400;color:#e4e4e4;">Scale Spans</div>
<div class="a" style="left:1563px;top:764px;width:330px;height:39px;background:#2a2a2a;border:1px solid #474747;border-radius:5px"></div>
<div class="t ty" style="left:1680.5px;top:778.1px;font-size:15.5px;font-weight:400;color:#e4e4e4;">More settings</div>
<svg style="left:1562px;top:845px" width="9" height="13" viewBox="0 0 9 13"><path d="M1.5 1 L7 6.5 L1.5 12" stroke="#c8c8c8" stroke-width="2" fill="none"/></svg>
<div class="t ty" style="left:1589px;top:846.1px;font-size:15px;font-weight:700;color:#d6d6d6;">SWF History</div>
<svg style="left:1562px;top:897px" width="9" height="13" viewBox="0 0 9 13"><path d="M1.5 1 L7 6.5 L1.5 12" stroke="#c8c8c8" stroke-width="2" fill="none"/></svg>
<div class="t ty" style="left:1589px;top:898.6px;font-size:15px;font-weight:700;color:#d6d6d6;">Accessibility</div>
<div class="a" style="left:1862px;top:889px;width:33px;height:18px;background:#c4c4c4;border-radius:9px"></div>
<div class="a" style="left:1880px;top:892px;width:12px;height:12px;background:#2e2e2e;border-radius:6px"></div>
<svg style="left:1538px;top:49px" width="382" height="16" viewBox="0 0 382 16"><path d="M0 1 C120 4, 260 10, 382 14.5" stroke="#272727" stroke-width="1.3" fill="none"/></svg>
<!-- TASKBAR -->
<div class="a" style="left:0;top:1020px;width:1920px;height:60px;background:#eeeeee"></div>
<div class="a" style="left:0;top:1020px;width:1920px;height:1px;background:#d6d6d6"></div>
<svg style="left:24px;top:1026px" width="36" height="40" viewBox="0 0 36 40"><path d="M16 9 L31 36 Q32 37.5 30 37.5 H2 Q0 37.5 1 36 Z" fill="#f2c314" stroke="#f2c314" stroke-width="2" stroke-linejoin="round"/><path d="M9 30 C6 30, 6 25, 9.5 25 C10 21, 15 20, 17 23 C19 21.5, 23 22.5, 22.5 26 C25 26, 25 30, 22.5 30 Z" fill="#3a3020"/><path d="M15.5 27 L13 32 H16 L14.5 36 L19 30.5 H16 L17.5 27 Z" fill="#f2c314"/></svg>
<div class="a" style="left:39px;top:1028px;width:20px;height:20px;border-radius:10px;background:#c42b1c;border:1.5px solid #eeeeee"></div>
<div class="t ty" style="left:44.5px;top:1033.0px;font-size:13px;font-weight:400;color:#ffffff;">5</div>
<div class="t ty" style="left:65px;top:1032.3px;font-size:15px;font-weight:400;color:#1c1c1c;">Thunderstorm w...</div>
<div class="t ty" style="left:65px;top:1052.3px;font-size:15px;font-weight:400;color:#5e5e5e;">In effect</div>
<svg style="left:420px;top:1036px" width="29" height="29" viewBox="0 0 29 29"><defs><linearGradient id="wg" x1="0" y1="0" x2="1" y2="1"><stop offset="0" stop-color="#3bc3f9"/><stop offset="1" stop-color="#0565d0"/></linearGradient></defs><rect x="0" y="0" width="13.6" height="13.6" rx="1.5" fill="url(#wg)"/><rect x="15.2" y="0" width="13.6" height="13.6" rx="1.5" fill="url(#wg)"/><rect x="0" y="15.2" width="13.6" height="13.6" rx="1.5" fill="url(#wg)"/><rect x="15.2" y="15.2" width="13.6" height="13.6" rx="1.5" fill="url(#wg)"/></svg>
<div class="a" style="left:467px;top:1030px;width:273px;height:40px;border-radius:20px;background:#f9f9f9;border:1px solid #dadada"></div>
<svg style="left:481px;top:1042px" width="19" height="18" viewBox="0 0 19 18"><circle cx="7.5" cy="7.5" r="6.2" stroke="#1a1a1a" stroke-width="2" fill="none"/><path d="M12 12 L17.5 17" stroke="#1a1a1a" stroke-width="2.4" stroke-linecap="round"/></svg>
<div class="t ty" style="left:512.5px;top:1043.5px;font-size:16.5px;font-weight:400;color:#5a5a5a;">Search</div>
<svg style="left:683px;top:1039px" width="44" height="24" viewBox="0 0 44 24"><rect x="3" y="0.5" width="25" height="17" rx="1" fill="#3e8fd8" stroke="#6a6aa0" stroke-width="1"/><rect x="5" y="2.5" width="21" height="13" fill="#58b4f0"/><path d="M9 7 H22 M9 10 H22" stroke="#2a70b8" stroke-width="1.3"/><path d="M2 18 H30 L32 22.5 H0 Z" fill="#9a9ab8" stroke="#707090" stroke-width="0.8"/><path d="M33 10 H41 L39.5 22 H34.5 Z" fill="#d42a2a"/><path d="M35 10 L34 2 M37 10 L37.5 1.5 M39 10 L41.5 3" stroke="#e8b020" stroke-width="1.5"/><path d="M35 10 L34 2" stroke="#30a040" stroke-width="1.5"/></svg>
<svg style="left:756px;top:1035px" width="31" height="29" viewBox="0 0 31 29"><rect x="7.5" y="0.5" width="22" height="20" rx="1.5" fill="#f4f4f4" stroke="#e0e0e0" stroke-width="1"/><rect x="0.5" y="8" width="22" height="20" rx="2" fill="#1e1e1e"/><rect x="7.5" y="8" width="15" height="13" fill="#9a9a9a"/></svg>
<svg style="left:810px;top:1035px" width="32" height="30" viewBox="0 0 32 30"><defs><linearGradient id="cp1" x1="0" y1="0" x2="0" y2="1"><stop offset="0" stop-color="#1aa0f0"/><stop offset="0.55" stop-color="#3aa870"/><stop offset="1" stop-color="#f0d000"/></linearGradient><linearGradient id="cp2" x1="0" y1="0" x2="0" y2="1"><stop offset="0" stop-color="#b050f0"/><stop offset="0.5" stop-color="#f05a90"/><stop offset="1" stop-color="#ffa060"/></linearGradient></defs><path d="M16 1 H24 C27 1, 28 4, 29 8 H20 Z" fill="#1a5ae0"/><path d="M8 20 H15 L14 28 C12 28, 10 27, 9.5 24 Z" fill="#f05a30"/><path d="M10 1 H22 C18 2, 17 6, 15.5 11 L13 18.5 C12.5 20, 11 20.5, 9 20.5 H4 C1.5 20.5, 0.5 19, 1 17 L5 5 C6 2, 7.5 1, 10 1 Z" fill="url(#cp1)"/><path d="M22 8.5 H28 C30.5 8.5, 31.5 10, 31 12 L27 24 C26 27, 24.5 28.5, 22 28.5 H10 C14 27.5, 15 23, 16.5 18 L19 11 C19.5 9.5, 20.5 8.5, 22 8.5 Z" fill="url(#cp2)"/></svg>
<svg style="left:866px;top:1036px" width="31" height="28" viewBox="0 0 31 28"><path d="M0 2 Q0 0.5 1.5 0.5 H10 L13 3.5 H29.5 Q30.5 3.5 30.5 5 V27 H0 Z" fill="#e8a820"/><rect x="0" y="6" width="30.5" height="21.5" fill="#ffd04a"/><rect x="5" y="19" width="20.5" height="9" rx="2" fill="#1a7fd6"/><rect x="9" y="21.5" width="12.5" height="1.6" fill="#0b4f95"/></svg>
<div class="a" style="left:877px;top:1070px;width:8px;height:3.5px;border-radius:2px;background:#888"></div>
<svg style="left:922px;top:1036px" width="28" height="28" viewBox="0 0 28 28"><circle cx="14" cy="14" r="14" fill="#0f3fd4"/><path d="M9 6 L4.5 22 M9 13 C11 11, 14 11, 13 14 L10.5 22 M16.5 11 L13 24 M16.5 11 C20 10, 23 11, 22 14.5 C21 18, 18 19, 15 18.5" stroke="#ffffff" stroke-width="2.6" fill="none"/><path d="M10 27 L19 1" stroke="#0f3fd4" stroke-width="1.2"/></svg>
<svg style="left:976px;top:1035px" width="30" height="30" viewBox="0 0 30 30"><path d="M8 6 V2 Q8 0.5 9.5 0.5 H20.5 Q22 0.5 22 2 V6" stroke="#3ec0f0" stroke-width="2" fill="none"/><rect x="0" y="5" width="29.5" height="25" rx="3" fill="#1c4e8a"/><rect x="9" y="11.5" width="5" height="5" fill="#f25022"/><rect x="15" y="11.5" width="5" height="5" fill="#7fba00"/><rect x="9" y="17.5" width="5" height="5" fill="#00a4ef"/><rect x="15" y="17.5" width="5" height="5" fill="#ffb900"/></svg>
<svg style="left:1032px;top:1028px" width="36" height="38" viewBox="0 0 36 38"><circle cx="14" cy="22" r="13.5" fill="#1a9ad6"/><path d="M9.5 17.5 C9.5 12.5, 19 12.5, 19 17.5 C19 20.5, 14.5 21, 14.5 24.5" stroke="#ffffff" stroke-width="3" fill="none"/><circle cx="14.3" cy="29" r="2" fill="#ffffff"/><circle cx="25" cy="10.5" r="10" fill="#fcc010"/></svg>
<svg style="left:1087px;top:1035px" width="29" height="30" viewBox="0 0 29 30"><defs><radialGradient id="ff" cx="0.7" cy="0.2" r="0.9"><stop offset="0" stop-color="#ffde3a"/><stop offset="0.4" stop-color="#ff8a1e"/><stop offset="1" stop-color="#e3215a"/></radialGradient></defs><circle cx="14.5" cy="16" r="13.5" fill="url(#ff)"/><circle cx="13.5" cy="14.5" r="6" fill="#8a40e8"/><path d="M4 10 C6 5, 11 5, 13 8 C9 8, 7 11, 8 15 C5 15, 4 12, 4 10Z" fill="#ff6a22"/><path d="M20 0 C24 3, 27 7, 26 12 L22 8 Z" fill="#ffbd2a"/></svg>
<svg style="left:1141px;top:1035px" width="31" height="30" viewBox="0 0 31 30"><defs><linearGradient id="ed" x1="0" y1="0.2" x2="1" y2="0.5"><stop offset="0" stop-color="#2fb4f4"/><stop offset="0.55" stop-color="#2ec4b8"/><stop offset="1" stop-color="#5ad650"/></linearGradient></defs><circle cx="15.5" cy="15" r="14.5" fill="url(#ed)"/><path d="M0.8 17 C0.5 10, 5 6, 11 6 C15.5 6, 18.5 8.5, 19.5 11.5 C17 10, 13 10.5, 11.5 13.5 C9.5 18, 12 25, 18 27 C22 28.5, 25.5 27.5, 27.5 26.5 C24.5 29, 20 30, 15.5 29.5 C7 29, 1 23.5, 0.8 17 Z" fill="#1583d8"/><path d="M11.5 13.5 C9.5 18, 12 25, 18 27 C22 28.5, 25.5 27.5, 28 26.5 C30 24, 27.5 26.5, 22 25.5 C17 24.5, 14.5 21, 14.5 17.5 C14.5 15, 15.5 13, 17 12 C14.5 11, 12.5 12, 11.5 13.5 Z" fill="#0f4f9c"/><circle cx="17.5" cy="15.5" r="3.4" fill="#f4f8fb"/><path d="M18.5 19 C22 21.5, 27 21, 29.5 18 C29.8 16, 29.5 14, 29 12.5 C27 15, 22 16.5, 19 15.5 Z" fill="#48d070"/></svg>
<div class="a" style="left:1196px;top:1035px;width:30px;height:30px;background:#ef443b"></div>
<svg style="left:1200px;top:1042px" width="22" height="16" viewBox="0 0 22 16"><path d="M1.5 8 L8 1.5 L14.5 8 L8 14.5 Z" fill="#ffffff"/><path d="M13 2 L19 8 L13 14" stroke="#ffffff" stroke-width="2" fill="none"/></svg>
<svg style="left:1251px;top:1035px" width="31" height="30" viewBox="0 0 31 30"><path d="M15 2 C7 2, 1.5 8, 1.5 15 C1.5 17.5, 2.5 20, 3.5 22 L1 29 L8.5 27 C10.5 28, 12.5 28.5, 15 28.5 C22.5 28.5, 28.5 22.5, 28.5 15 C28.5 8, 22.5 2, 15 2Z" fill="none" stroke="#1f8f4a" stroke-width="2.6"/><path d="M10 9 C9 10, 8.5 12, 10 15 C12 18.5, 15 21, 18.5 21.5 C20 21.5, 21 20.5, 21 19.5 L18 17.5 L16.5 18.5 C14.5 17.5, 13 16, 12 14 L13 12.5 L11.5 9 Z" fill="#1f8f4a"/></svg>
<div class="a" style="left:1264px;top:1028px;width:26px;height:21px;border-radius:11px;background:#237f8f"></div>
<div class="t ty" style="left:1270px;top:1033.0px;font-size:13px;font-weight:400;color:#ffffff;">23</div>
<svg style="left:1306px;top:1035px" width="30" height="30" viewBox="-15 -15 30 30"><path d="M0 -15 A15 15 0 0 1 12.99 7.5 L5.2 3 A6 6 0 0 0 0 -6 Z" fill="#fbc02d"/><path d="M0 -15 L13 -15 A15 15 0 0 1 14.5 -3.8 Z" fill="none"/><path d="M-12.99 -7.5 A15 15 0 0 1 12.99 -7.5 L0 -6 A6 6 0 0 0 -5.2 3 Z" fill="#e53935"/><path d="M-12.99 -7.5 L-5.2 3 A6 6 0 0 0 5.2 3 L0 15 A15 15 0 0 1 -12.99 -7.5Z" fill="#43a047"/><path d="M12.99 -7.5 A15 15 0 0 1 0 15 L5.2 3 A6 6 0 0 0 0 -6 Z" fill="#fbc02d"/><circle cx="0" cy="0" r="6.8" fill="#ffffff"/><circle cx="0" cy="0" r="5.3" fill="#1e88e5"/></svg>
<div class="a" style="left:1322px;top:1028px;width:21px;height:21px;border-radius:11px;background:radial-gradient(circle at 55% 45%, #c89070 0 35%, #6a5040 60%, #d8c8b8 100%);border:1px solid #c8c8c8"></div>
<div class="a" style="left:1317px;top:1070px;width:8px;height:3.5px;border-radius:2px;background:#888"></div>
<svg style="left:1361px;top:1035px" width="30" height="30" viewBox="-15 -15 30 30"><path d="M0 -15 A15 15 0 0 1 12.99 7.5 L5.2 3 A6 6 0 0 0 0 -6 Z" fill="#fbc02d"/><path d="M0 -15 L13 -15 A15 15 0 0 1 14.5 -3.8 Z" fill="none"/><path d="M-12.99 -7.5 A15 15 0 0 1 12.99 -7.5 L0 -6 A6 6 0 0 0 -5.2 3 Z" fill="#e53935"/><path d="M-12.99 -7.5 L-5.2 3 A6 6 0 0 0 5.2 3 L0 15 A15 15 0 0 1 -12.99 -7.5Z" fill="#43a047"/><path d="M12.99 -7.5 A15 15 0 0 1 0 15 L5.2 3 A6 6 0 0 0 0 -6 Z" fill="#fbc02d"/><circle cx="0" cy="0" r="6.8" fill="#ffffff"/><circle cx="0" cy="0" r="5.3" fill="#1e88e5"/></svg>
<div class="a" style="left:1377px;top:1028px;width:21px;height:21px;border-radius:11px;background:#e6457e;border:1px solid #c8c8c8"></div>
<div class="t ty" style="left:1383px;top:1033.8px;font-size:12px;font-weight:400;color:#ffffff;">T</div>
<div class="a" style="left:1372px;top:1070px;width:8px;height:3.5px;border-radius:2px;background:#888"></div>
<svg style="left:1416px;top:1035px" width="30" height="30" viewBox="-15 -15 30 30"><path d="M0 -15 A15 15 0 0 1 12.99 7.5 L5.2 3 A6 6 0 0 0 0 -6 Z" fill="#fbc02d"/><path d="M0 -15 L13 -15 A15 15 0 0 1 14.5 -3.8 Z" fill="none"/><path d="M-12.99 -7.5 A15 15 0 0 1 12.99 -7.5 L0 -6 A6 6 0 0 0 -5.2 3 Z" fill="#e53935"/><path d="M-12.99 -7.5 L-5.2 3 A6 6 0 0 0 5.2 3 L0 15 A15 15 0 0 1 -12.99 -7.5Z" fill="#43a047"/><path d="M12.99 -7.5 A15 15 0 0 1 0 15 L5.2 3 A6 6 0 0 0 0 -6 Z" fill="#fbc02d"/><circle cx="0" cy="0" r="6.8" fill="#ffffff"/><circle cx="0" cy="0" r="5.3" fill="#1e88e5"/></svg>
<div class="a" style="left:1432px;top:1028px;width:21px;height:21px;border-radius:11px;background:radial-gradient(circle at 55% 50%, #d0a890 0 30%, #8a6a5a 50%, #e8e8e8 80%);border:1px solid #c8c8c8"></div>
<div class="a" style="left:1427px;top:1070px;width:8px;height:3.5px;border-radius:2px;background:#888"></div>
<div class="a" style="left:1462px;top:1026px;width:48px;height:48px;border-radius:4px;background:#f8f8f8;border:1px solid #e4e4e4"></div>
<div class="a" style="left:1472px;top:1036px;width:28px;height:26px;border-radius:4px;background:#00005b"></div>
<div class="t" style="left:1474.5px;top:1040.5px;font-size:16px;font-weight:700;color:#9a9aff;">An</div>
<div class="a" style="left:1476px;top:1070px;width:20px;height:4px;border-radius:2px;background:#2e8a99"></div>
<svg style="left:1626px;top:1045px" width="15" height="9" viewBox="0 0 15 9"><path d="M1 8 L7.5 1.5 L14 8" stroke="#1a1a1a" stroke-width="1.6" fill="none"/></svg>
<div class="t ty" style="left:1667px;top:1044.6px;font-size:13.2px;font-weight:400;color:#1a1a1a;">ENG</div>
<svg style="left:1718px;top:1042px" width="21" height="15" viewBox="0 0 21 15"><path d="M1 5 C6 0, 15 0, 20 5 M4 8 C8 4.5, 13 4.5, 17 8 M7 11 C9 9.5, 12 9.5, 14 11" stroke="#1a1a1a" stroke-width="1.4" fill="none"/><circle cx="10.5" cy="13.5" r="1.4" fill="#1a1a1a"/></svg>
<svg style="left:1748px;top:1042px" width="21" height="16" viewBox="0 0 21 16"><path d="M1 5 H4.5 L9 1 V15 L4.5 11 H1 Z" stroke="#1a1a1a" stroke-width="1.3" fill="none"/><path d="M12 5 C13.5 6.5, 13.5 9.5, 12 11 M14.5 3 C17 5.5, 17 10.5, 14.5 13" stroke="#1a1a1a" stroke-width="1.3" fill="none"/><path d="M17 1 C20.5 4.5, 20.5 11.5, 17 15" stroke="#bbbbbb" stroke-width="1.1" fill="none"/></svg>
<svg style="left:1777px;top:1040px" width="22" height="17" viewBox="0 0 22 17"><rect x="1" y="4.5" width="17" height="11" rx="2" stroke="#1a1a1a" stroke-width="1.4" fill="none"/><rect x="18.5" y="8" width="2.5" height="4" fill="#1a1a1a"/><path d="M6 0.5 L3 7 H6 L4.5 12 L9 5.5 H6 Z" fill="#1a1a1a" stroke="#eeeeee" stroke-width="0.8"/></svg>
<div class="t ty" style="left:1860px;top:1033.1px;font-size:14px;font-weight:400;color:#1a1a1a;">21:47</div>
<div class="t ty" style="left:1818.7px;top:1052.0px;font-size:15px;font-weight:400;color:#1a1a1a;">25-09-2025</div>
</body></html>
